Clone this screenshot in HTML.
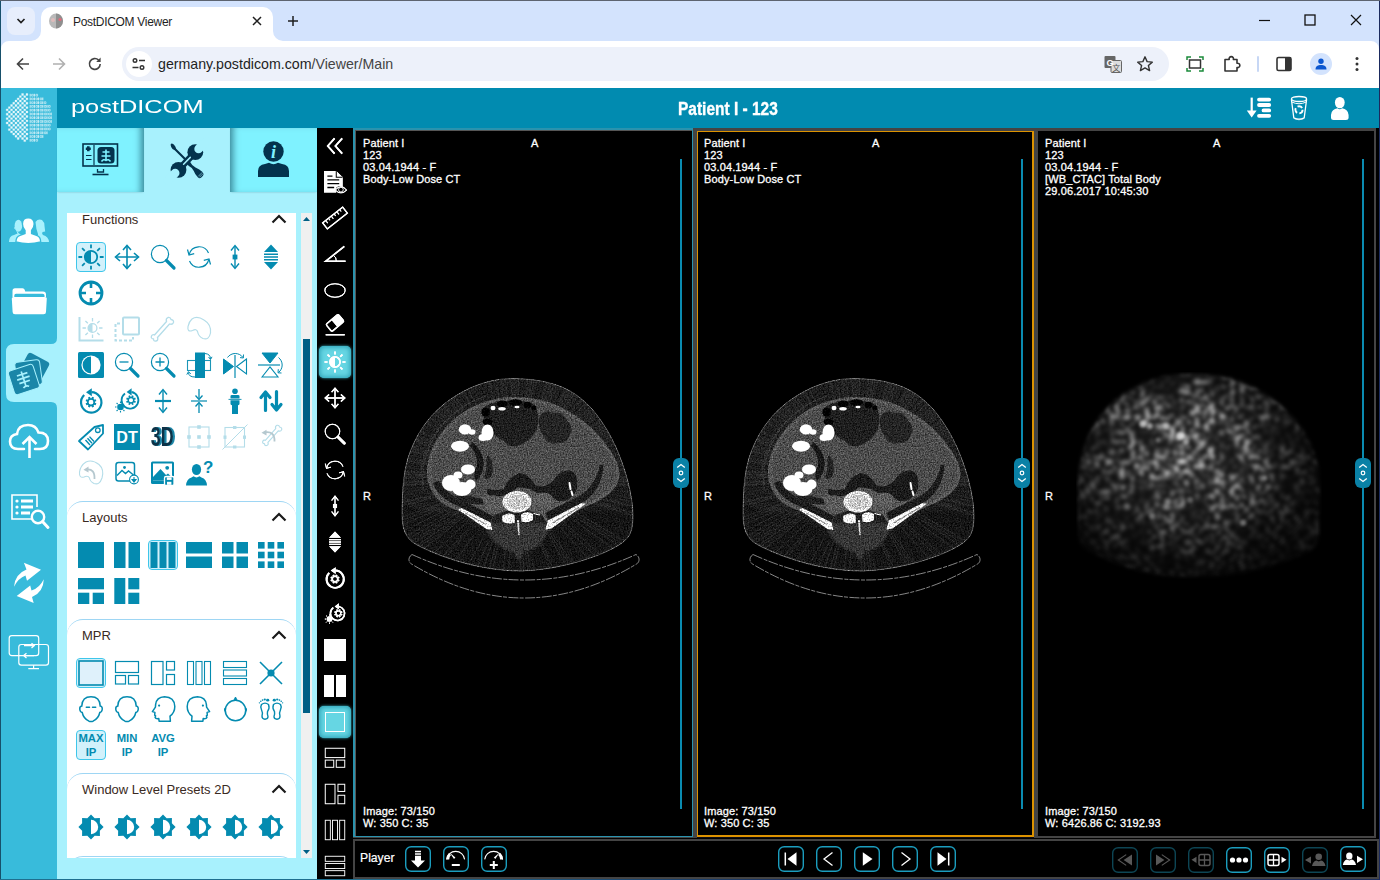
<!DOCTYPE html>
<html><head><meta charset='utf-8'><title>PostDICOM Viewer</title>
<style>
*{box-sizing:border-box;margin:0;padding:0}
html,body{width:1380px;height:880px;overflow:hidden;background:#000;font-family:"Liberation Sans",sans-serif}
.abs{position:absolute}
#root{position:relative;width:1380px;height:880px;overflow:hidden;background:#000}
svg{position:absolute;overflow:visible}
.t{position:absolute;white-space:nowrap}

#tabstrip{left:0;top:0;width:1380px;height:41px;background:#d3e3fd}
#toolbar{left:0;top:41px;width:1380px;height:47px;background:#fff}
#tab{left:41px;top:7px;width:232px;height:34px;background:#fff;border-radius:10px 10px 0 0}
#omni{left:122px;top:47px;width:1047px;height:34px;border-radius:17px;background:#edf1fa}
.ct{font-size:12.5px;color:#1f1f1f}

#side{left:1px;top:88px;width:56px;height:792px;background:#38bbdb}
#hdr{left:57px;top:88px;width:1323px;height:40px;background:#018bb0}

#panel{left:57px;top:128px;width:260px;height:752px;background:#a8f1fd}
.ptab{top:128px;height:64px;background:#7ff2ff}
#pbox{left:67px;top:213px;width:229px;height:645px;background:#fff;overflow:hidden}
.sec{position:absolute;left:0;width:229px;border-top:1px solid #9ed6f4;border-radius:16px 16px 0 0;height:40px}
.sh{position:absolute;left:15px;font-size:13px;color:#3a2a22}
.ic{position:absolute;width:26px;height:26px}
.selb{position:absolute;width:30px;height:30px;border:1px solid #3ec6ea;border-radius:4px;background:#d2f1fb}

#vtool{left:317px;top:128px;width:36px;height:752px;background:#000}
.vsel{position:absolute;left:319px;width:32px;height:32px;border-radius:5px;background:#66d6e3;box-shadow:inset 0 0 5px 1px #2a9fb4, 0 0 3px #39b9cc}

.vt{position:absolute;white-space:nowrap;font-size:11px;line-height:12px;color:#fff;-webkit-text-stroke:.3px #fff;letter-spacing:.13px}
.sl{position:absolute;width:2px;background:#0a8bb0}
.sh2{position:absolute;width:16px;height:30px;border-radius:6px;background:#0a81a6}

#player{left:353px;top:839px;width:1026px;height:40px;background:#000;border:2px solid #444}
.pb{position:absolute;top:846px;width:26px;height:26px;border:1px solid #1c9fc0;border-radius:5px;background:#000}
.pb.d{border-color:#0d4453}
</style></head><body><div id='root'>
<div class='abs' id='tabstrip'></div><div class='abs' id='toolbar'></div><div class='abs' style='left:7px;top:7px;width:28px;height:28px;border-radius:8px;background:#e7eefc'></div><svg style='left:15px;top:15px' width='12' height='12' viewBox='0 0 12 12'><path d='M2.5 4 L6 7.5 L9.5 4' fill='none' stroke='#1f1f1f' stroke-width='1.7'/></svg><div class='abs' id='tab'></div><svg style='left:31px;top:31px' width='10' height='10'><path d='M10 0 V10 H0 A10 10 0 0 0 10 0Z' fill='#fff'/></svg><svg style='left:273px;top:31px' width='10' height='10'><path d='M0 0 V10 H10 A10 10 0 0 1 0 0Z' fill='#fff'/></svg><svg style='left:1px;top:41px' width='8' height='8'><path d='M0 0 H8 A8 8 0 0 0 0 8Z' fill='#d3e3fd'/></svg><svg style='left:1371px;top:41px' width='8' height='8'><path d='M8 0 H0 A8 8 0 0 1 8 8Z' fill='#d3e3fd'/></svg><svg style='left:48px;top:13px' width='16' height='16' viewBox='0 0 16 16'><ellipse cx='8' cy='8' rx='7' ry='7.6' fill='#b9b9b9'/><path d='M8 .4 A7 7.6 0 0 1 8 15.6Z' fill='#8f8f8f'/><circle cx='12' cy='6.5' r='1.6' fill='#e06a7a'/><circle cx='5' cy='7' r='2' fill='#e9bcbc' opacity='.8'/></svg><div class='t ct' style='left:73px;top:14.500px;font-size:12px;letter-spacing:-.3px'>PostDICOM Viewer</div><svg style='left:251px;top:15px' width='12' height='12'><path d='M2 2 L10 10 M10 2 L2 10' stroke='#1f1f1f' stroke-width='1.5'/></svg><svg style='left:287px;top:15px' width='12' height='12'><path d='M6 1 V11 M1 6 H11' stroke='#1f1f1f' stroke-width='1.5'/></svg><svg style='left:1259px;top:14px' width='12' height='12'><path d='M0 6.5 H11' stroke='#111' stroke-width='1.2'/></svg><svg style='left:1304px;top:14px' width='12' height='12'><rect x='1' y='1' width='10' height='10' fill='none' stroke='#111' stroke-width='1.3'/></svg><svg style='left:1350px;top:14px' width='12' height='12'><path d='M1 1 L11 11 M11 1 L1 11' stroke='#111' stroke-width='1.2'/></svg><svg style='left:15px;top:56px' width='16' height='16' viewBox='0 0 16 16'><path d='M14 8 H3 M8 2.5 L2.5 8 L8 13.5' fill='none' stroke='#444' stroke-width='1.6'/></svg><svg style='left:51px;top:56px' width='16' height='16' viewBox='0 0 16 16'><path d='M2 8 H13 M8 2.5 L13.5 8 L8 13.5' fill='none' stroke='#b0b0b0' stroke-width='1.6'/></svg><svg style='left:87px;top:56px' width='16' height='16' viewBox='0 0 16 16'><path d='M13.2 8 A5.4 5.4 0 1 1 11.6 4.1' fill='none' stroke='#444' stroke-width='1.6'/><path d='M13.6 1.6 V6 H9.2Z' fill='#444'/></svg><div class='abs' id='omni'></div><div class='abs' style='left:126px;top:51px;width:26px;height:26px;border-radius:13px;background:#fff'></div><svg style='left:131px;top:57px' width='16' height='14' viewBox='0 0 16 14'><circle cx='4' cy='3.5' r='1.8' fill='none' stroke='#333' stroke-width='1.4'/><path d='M8 3.5 H14' stroke='#333' stroke-width='1.5'/><circle cx='11' cy='10.5' r='1.8' fill='none' stroke='#333' stroke-width='1.4'/><path d='M1.5 10.5 H7.5' stroke='#333' stroke-width='1.5'/></svg><div class='t' style='left:158px;top:56px;font-size:14.2px;color:#1f1f1f'>germany.postdicom.com<span style='color:#444'>/Viewer/Main</span></div><svg style='left:1104px;top:55px' width='18' height='18' viewBox='0 0 18 18'><rect x='0.5' y='1' width='11' height='12' rx='1' fill='#666'/><rect x='7' y='5.5' width='10.5' height='12' rx='1' fill='#ddd' stroke='#666' stroke-width='1'/><text x='6' y='10.5' font-size='9' font-weight='bold' fill='#fff' text-anchor='middle' font-family='Liberation Sans, sans-serif'>G</text><text x='12.3' y='15.5' font-size='8' fill='#555' text-anchor='middle' font-family='Liberation Sans, Noto Sans CJK SC, sans-serif'>文</text></svg><svg style='left:1136px;top:55px' width='18' height='18' viewBox='0 0 18 18'><path d='M9 1.8 L11.1 6.6 L16.3 7.1 L12.4 10.5 L13.6 15.6 L9 12.9 L4.4 15.6 L5.6 10.5 L1.7 7.1 L6.9 6.6Z' fill='none' stroke='#333' stroke-width='1.4' stroke-linejoin='round'/></svg><svg style='left:1186px;top:55px' width='18' height='18' viewBox='0 0 18 18'><rect x='3.5' y='5' width='11' height='8' fill='none' stroke='#333' stroke-width='1.5'/><path d='M1 5 V2 H5 M13 2 H17 V5 M17 13 V16 H13 M5 16 H1 V13' fill='none' stroke='#1a8a3a' stroke-width='1.5'/></svg><svg style='left:1222px;top:54px' width='20' height='20' viewBox='0 0 20 20'><path d='M3 5.5 H7.2 A2.2 2.2 0 1 1 11.4 5.5 H15 V9.3 A2.2 2.2 0 1 1 15 13.5 V17 H3Z' fill='none' stroke='#333' stroke-width='1.6' stroke-linejoin='round'/></svg><div class='abs' style='left:1257px;top:56px;width:2px;height:16px;background:#c7d7f5;border-radius:1px'></div><svg style='left:1276px;top:56px' width='16' height='16' viewBox='0 0 16 16'><rect x='1' y='1.5' width='14' height='13' rx='1.5' fill='none' stroke='#333' stroke-width='1.6'/><rect x='9' y='1.5' width='6' height='13' fill='#333'/></svg><div class='abs' style='left:1310px;top:53px;width:22px;height:22px;border-radius:11px;background:#d3e3fd'></div><svg style='left:1314px;top:57px' width='14' height='14' viewBox='0 0 14 14'><circle cx='7' cy='4.3' r='2.7' fill='#0b57d0'/><path d='M1.5 12.5 C1.5 9 4 8 7 8 C10 8 12.5 9 12.5 12.5Z' fill='#0b57d0'/></svg><svg style='left:1354px;top:56px' width='6' height='16' viewBox='0 0 6 16'><circle cx='3' cy='2.5' r='1.5' fill='#333'/><circle cx='3' cy='8' r='1.5' fill='#333'/><circle cx='3' cy='13.5' r='1.5' fill='#333'/></svg>
<div class='abs' id='side'></div><div class='abs' id='hdr'></div><svg style='left:0;top:88px' width='58' height='58' viewBox='0 0 58 58'><path d='M26.0 5.5h1.900v1.900h-1.900zM21.6 5.5h1.900v1.900h-1.900zM23.8 7.7h1.900v1.900h-1.900zM19.4 7.7h1.900v1.900h-1.900zM26.0 9.9h1.900v1.900h-1.900zM21.6 9.9h1.900v1.900h-1.900zM17.2 9.9h1.900v1.900h-1.900zM23.8 12.1h1.900v1.900h-1.900zM19.4 12.1h1.900v1.900h-1.900zM15.0 12.1h1.900v1.900h-1.900zM26.0 14.3h1.900v1.900h-1.900zM21.6 14.3h1.900v1.900h-1.900zM17.2 14.3h1.900v1.900h-1.900zM12.8 14.3h1.900v1.900h-1.900zM23.8 16.5h1.900v1.900h-1.900zM19.4 16.5h1.900v1.900h-1.900zM15.0 16.5h1.900v1.900h-1.900zM10.6 16.5h1.900v1.900h-1.900zM26.0 18.7h1.900v1.900h-1.900zM21.6 18.7h1.900v1.900h-1.900zM17.2 18.7h1.900v1.900h-1.900zM12.8 18.7h1.900v1.900h-1.900zM8.4 18.7h1.900v1.900h-1.900zM23.8 20.9h1.900v1.900h-1.900zM19.4 20.9h1.900v1.900h-1.900zM15.0 20.9h1.900v1.900h-1.900zM10.6 20.9h1.900v1.900h-1.900zM6.2 20.9h1.900v1.900h-1.900zM26.0 23.1h1.900v1.900h-1.900zM21.6 23.1h1.900v1.900h-1.900zM17.2 23.1h1.900v1.900h-1.900zM12.8 23.1h1.900v1.900h-1.900zM8.4 23.1h1.900v1.900h-1.900zM23.8 25.3h1.900v1.900h-1.900zM19.4 25.3h1.900v1.900h-1.900zM15.0 25.3h1.900v1.900h-1.900zM10.6 25.3h1.900v1.900h-1.900zM6.2 25.3h1.900v1.900h-1.900zM26.0 27.5h1.900v1.900h-1.900zM21.6 27.5h1.900v1.900h-1.900zM17.2 27.5h1.900v1.900h-1.900zM12.8 27.5h1.900v1.900h-1.900zM8.4 27.5h1.900v1.900h-1.900zM23.8 29.7h1.900v1.900h-1.900zM19.4 29.7h1.900v1.900h-1.900zM15.0 29.7h1.900v1.900h-1.900zM10.6 29.7h1.900v1.900h-1.900zM6.2 29.7h1.900v1.900h-1.900zM26.0 31.9h1.900v1.900h-1.900zM21.6 31.9h1.900v1.900h-1.900zM17.2 31.9h1.900v1.900h-1.900zM12.8 31.9h1.900v1.900h-1.900zM8.4 31.9h1.900v1.900h-1.900zM23.8 34.1h1.900v1.900h-1.900zM19.4 34.1h1.900v1.900h-1.900zM15.0 34.1h1.900v1.900h-1.900zM10.6 34.1h1.900v1.900h-1.900zM6.2 34.1h1.900v1.900h-1.900zM26.0 36.3h1.900v1.900h-1.900zM21.6 36.3h1.900v1.900h-1.900zM17.2 36.3h1.900v1.900h-1.900zM12.8 36.3h1.900v1.900h-1.900zM8.4 36.3h1.900v1.900h-1.900zM23.8 38.5h1.900v1.900h-1.900zM19.4 38.5h1.900v1.900h-1.900zM15.0 38.5h1.900v1.900h-1.900zM10.6 38.5h1.900v1.900h-1.900zM26.0 40.7h1.900v1.900h-1.900zM21.6 40.7h1.900v1.900h-1.900zM17.2 40.7h1.900v1.900h-1.900zM12.8 40.7h1.900v1.900h-1.900zM8.4 40.7h1.900v1.900h-1.900zM23.8 42.9h1.900v1.900h-1.900zM19.4 42.9h1.900v1.900h-1.900zM15.0 42.9h1.900v1.900h-1.900zM10.6 42.9h1.900v1.900h-1.900zM26.0 45.1h1.900v1.900h-1.900zM21.6 45.1h1.900v1.900h-1.900zM17.2 45.1h1.900v1.900h-1.900zM12.8 45.1h1.900v1.900h-1.900zM23.8 47.3h1.900v1.900h-1.900zM19.4 47.3h1.900v1.900h-1.900zM15.0 47.3h1.900v1.900h-1.900zM26.0 49.5h1.900v1.900h-1.900zM21.6 49.5h1.900v1.900h-1.900zM17.2 49.5h1.900v1.900h-1.900zM23.8 51.7h1.900v1.900h-1.900z' fill='#fff' stroke='#fff' stroke-width='.3' opacity='.9'/><path d='M30.2 5.8v2.800M34.4 5.8v2.800M30.2 9.5v2.800M34.4 9.5v2.800M38.6 9.5v2.800M42.8 9.5v2.800M30.2 13.3v2.800M34.4 13.3v2.800M38.6 13.3v2.800M42.8 13.3v2.800M30.2 17.0v2.800M34.4 17.0v2.800M38.6 17.0v2.800M42.8 17.0v2.800M47.0 17.0v2.800M30.2 20.8v2.800M34.4 20.8v2.800M38.6 20.8v2.800M42.8 20.8v2.800M47.0 20.8v2.800M30.2 24.6v2.800M34.4 24.6v2.800M38.6 24.6v2.800M42.8 24.6v2.800M47.0 24.6v2.800M51.2 24.6v2.800M30.2 28.3v2.800M34.4 28.3v2.800M38.6 28.3v2.800M42.8 28.3v2.800M47.0 28.3v2.800M51.2 28.3v2.800M30.2 32.1v2.800M34.4 32.1v2.800M38.6 32.1v2.800M42.8 32.1v2.800M47.0 32.1v2.800M51.2 32.1v2.800M30.2 35.8v2.800M34.4 35.8v2.800M38.6 35.8v2.800M42.8 35.8v2.800M47.0 35.8v2.800M30.2 39.6v2.800M34.4 39.6v2.800M38.6 39.6v2.800M42.8 39.6v2.800M47.0 39.6v2.800M30.2 43.4v2.800M34.4 43.4v2.800M38.6 43.4v2.800M42.8 43.4v2.800M47.0 43.4v2.800M30.2 47.1v2.800M34.4 47.1v2.800M38.6 47.1v2.800M42.8 47.1v2.800M30.2 50.9v2.800M34.4 50.9v2.800' fill='none' stroke='#fff' stroke-width='.9' opacity='.85'/><path d='M31.6 6.3h1.700v1.800h-1.700zM35.9 6.3h1.700v1.800h-1.700zM31.6 10.0h1.700v1.800h-1.700zM35.9 10.0h1.700v1.800h-1.700zM40.1 10.0h1.700v1.800h-1.700zM31.6 13.8h1.700v1.800h-1.700zM35.9 13.8h1.700v1.800h-1.700zM40.1 13.8h1.700v1.800h-1.700zM44.3 13.8h1.700v1.800h-1.700zM31.6 17.5h1.700v1.800h-1.700zM35.9 17.5h1.700v1.800h-1.700zM40.1 17.5h1.700v1.800h-1.700zM44.3 17.5h1.700v1.800h-1.700zM48.5 17.5h1.700v1.800h-1.700zM31.6 21.3h1.700v1.800h-1.700zM35.9 21.3h1.700v1.800h-1.700zM40.1 21.3h1.700v1.800h-1.700zM44.3 21.3h1.700v1.800h-1.700zM48.5 21.3h1.700v1.800h-1.700zM31.6 25.1h1.700v1.800h-1.700zM35.9 25.1h1.700v1.800h-1.700zM40.1 25.1h1.700v1.800h-1.700zM44.3 25.1h1.700v1.800h-1.700zM48.5 25.1h1.700v1.800h-1.700zM31.6 28.8h1.700v1.800h-1.700zM35.9 28.8h1.700v1.800h-1.700zM40.1 28.8h1.700v1.800h-1.700zM44.3 28.8h1.700v1.800h-1.700zM48.5 28.8h1.700v1.800h-1.700zM31.6 32.6h1.700v1.800h-1.700zM35.9 32.6h1.700v1.800h-1.700zM40.1 32.6h1.700v1.800h-1.700zM44.3 32.6h1.700v1.800h-1.700zM48.5 32.6h1.700v1.800h-1.700zM31.6 36.3h1.700v1.800h-1.700zM35.9 36.3h1.700v1.800h-1.700zM40.1 36.3h1.700v1.800h-1.700zM44.3 36.3h1.700v1.800h-1.700zM48.5 36.3h1.700v1.800h-1.700zM31.6 40.1h1.700v1.800h-1.700zM35.9 40.1h1.700v1.800h-1.700zM40.1 40.1h1.700v1.800h-1.700zM44.3 40.1h1.700v1.800h-1.700zM48.5 40.1h1.700v1.800h-1.700zM31.6 43.9h1.700v1.800h-1.700zM35.9 43.9h1.700v1.800h-1.700zM40.1 43.9h1.700v1.800h-1.700zM44.3 43.9h1.700v1.800h-1.700zM31.6 47.6h1.700v1.800h-1.700zM35.9 47.6h1.700v1.800h-1.700zM40.1 47.6h1.700v1.800h-1.700zM31.6 51.4h1.700v1.800h-1.700zM35.9 51.4h1.700v1.800h-1.700z' fill='none' stroke='#fff' stroke-width='.65' opacity='.8'/></svg><div class='t' style='left:71px;top:96.500px;font-size:17.500px;color:#fff;transform:scaleX(1.45);transform-origin:0 0'>postDICOM</div><div class='t' style='left:678px;top:98.800px;font-size:17.500px;font-weight:bold;color:#fff;-webkit-text-stroke:.35px #fff;transform:scaleX(.885);transform-origin:0 0'>Patient I - 123</div><svg style='left:1246px;top:95px' width='26' height='26' viewBox='0 0 26 26'><path d='M5.700 2.600 V17' stroke='#fff' stroke-width='2.200'/><path d='M.800 15.500 L5.700 22.600 L10.600 15.500Z' fill='#fff'/><path d='M13 4.600 H23.200 M13 10 H23.200 M17.500 15.400 H23.200 M13 20.800 H23.200' stroke='#fff' stroke-width='3.800' stroke-linecap='round'/></svg><svg style='left:1288px;top:94px' width='22' height='28' viewBox='0 0 22 28'><ellipse cx='11' cy='5' rx='7.600' ry='2.500' fill='none' stroke='#fff' stroke-width='1.300'/><path d='M3.400 5.500 L5.800 23.800 Q11 26.300 16.200 23.800 L18.600 5.500' fill='none' stroke='#fff' stroke-width='1.300'/><path d='M3.800 8 Q11 11.500 18.200 8' fill='none' stroke='#fff' stroke-width='1'/><circle cx='11' cy='15.800' r='3.600' fill='none' stroke='#fff' stroke-width='1.900' stroke-dasharray='5.200 2.300'/><path d='M6.500 24.800 Q11 26.800 15.500 24.800' fill='none' stroke='#fff' stroke-width='.8' opacity='.8'/></svg><svg style='left:1329px;top:94px' width='22' height='28' viewBox='0 0 22 28'><ellipse cx='10.800' cy='8.600' rx='4.900' ry='5.700' fill='#fff'/><path d='M2 24 Q1.500 16.500 6 15 L8.500 14.300 Q10.800 16 13.100 14.300 L15.600 15 Q20 16.500 19.600 24 Q19.500 25.800 17 26 H4.500 Q2 25.800 2 24Z' fill='#fff'/></svg><svg style='left:1px;top:334px' width='57' height='78' viewBox='0 0 57 78'><path d='M56 4 V74 Q56 68 50 68 H13 Q5 68 5 60 V18 Q5 10 13 10 H50 Q56 10 56 4Z' fill='#a8f1fd'/></svg><svg style='left:8px;top:215px' width='42' height='30' viewBox='0 0 42 30'><g fill='#a8f1fd'><ellipse cx='10.400' cy='10.800' rx='3.800' ry='6'/><path d='M6.600 12 Q9 16 11 18.500 L14 20 V27 H.900 Q1 21 6 20 L9.500 18.500Z'/><path d='M6.600 12 L5.800 13 L7.500 14.500Z'/><path d='M27.500 7 Q30 3.500 34 5 Q36.500 7 36.500 11 L37.200 16.500 L34.500 17 Q33.500 19 35 20 Q40.500 21.500 41 27 H30 V19 Q28 14 27.500 7Z'/></g><g fill='#fff' stroke='#38bbdb' stroke-width='1.400'><path d='M20.300 2.700 Q26.200 2.700 26.200 9 Q26.200 12.500 23.600 15.500 V18.500 L28.500 20.300 Q32.700 21.500 32.700 27 Q20.300 30.300 7.900 27 Q7.900 21.500 12.100 20.300 L17 18.500 V15.500 Q14.400 12.500 14.400 9 Q14.400 2.700 20.300 2.700Z'/></g></svg><svg style='left:11px;top:287px' width='37' height='28' viewBox='0 0 37 28'><path d='M1.500 4 Q1.500 1.300 4 1.300 H11.500 Q13.300 1.300 13.800 3 L14.200 4.500 H32 Q35 4.500 35 7.500 V10 H33.500 V8.500 Q33.500 6.800 31.500 6.800 H5 Q3.300 6.800 3.300 8.500 V10 H1.500Z' fill='#fff'/><path d='M.800 11.500 Q.800 10 2.500 10 H34 Q35.800 10 35.800 11.500 L35 25 Q35 27.300 32.500 27.300 H4 Q1.700 27.300 1.600 25Z' fill='#fff'/></svg><svg style='left:8px;top:350px' width='42' height='46' viewBox='0 0 42 46'><rect x='14' y='6' width='24' height='24' rx='3' fill='#1a86a8' transform='rotate(28 26 18)'/><rect x='8' y='11' width='25' height='25' rx='3' fill='#1a86a8' stroke='#a8f1fd' stroke-width='1' transform='rotate(-8 20 23)'/><g transform='rotate(-18 16 30)'><rect x='3' y='17' width='26' height='25' rx='3' fill='#1a86a8' stroke='#a8f1fd' stroke-width='1'/><path d='M16 21 V37 M10.5 24 H21.5 M9.5 28 H22.5 M10.5 32 H21.5 M13 37.5 Q16 35 19 37.5' stroke='#a8f1fd' stroke-width='1.7' fill='none'/></g></svg><svg style='left:8px;top:422px' width='42' height='38' viewBox='0 0 42 38'><path d='M16 27 H10 Q2 27 2 19.5 Q2 13 9 12 Q10 3 20 3 Q28 3 30.5 10.5 Q40 10.5 40 19 Q40 27 32 27 H27' fill='none' stroke='#fff' stroke-width='2.6' stroke-linecap='round'/><path d='M21.5 36 V16 M14.5 22 L21.5 15 L28.5 22' fill='none' stroke='#fff' stroke-width='2.6'/></svg><svg style='left:10px;top:493px' width='40' height='38' viewBox='0 0 40 38'><path d='M27 26 H2 V2 H27 V14' fill='none' stroke='#fff' stroke-width='1.6'/><g fill='#fff'><circle cx='7' cy='8' r='1.6'/><circle cx='7' cy='14' r='1.6'/><circle cx='7' cy='20' r='1.6'/><rect x='11' y='6.5' width='12' height='3'/><rect x='11' y='12.5' width='12' height='3'/><rect x='11' y='18.5' width='9' height='3'/></g><circle cx='28' cy='24' r='6.2' fill='#38bbdb' stroke='#fff' stroke-width='2.4'/><path d='M32.5 28.5 L38 34.5' stroke='#fff' stroke-width='3' stroke-linecap='round'/></svg><svg style='left:12px;top:560px' width='34' height='46' viewBox='0 0 34 46'><path d='M2 26.700 Q3 14 14.500 9.500 L11.900 2.800 L29 9.700 L15 20.800 L13.500 15.500 Q6.500 18 2 26.700Z' fill='#fff'/><path d='M31.800 19.200 Q31.500 32 20 37 L21.700 43 L4.700 36 L18.200 25.600 L19.500 30.500 Q27.500 28 31.800 19.200Z' fill='#fff'/></svg><svg style='left:8px;top:633px' width='42' height='40' viewBox='0 0 42 40'><rect x='1.200' y='2.700' width='29.500' height='19.900' rx='2.600' fill='none' stroke='#fff' stroke-width='1.200'/><rect x='10.800' y='11.500' width='29.700' height='20.700' rx='2.600' fill='none' stroke='#fff' stroke-width='1.200'/><path d='M16 12.600 H26 M23.500 10.300 L26.300 12.600 L23.500 14.900 M26 22.600 H16 M18.500 20.300 L15.700 22.600 L18.500 24.900' fill='none' stroke='#fff' stroke-width='1.300'/><path d='M25.600 32.200 V35.400 M20.300 35.700 H31' stroke='#fff' stroke-width='1.200'/></svg>
<div class='abs' id='panel'></div><div class='abs ptab' style='left:57px;width:87px;box-shadow:inset -7px 0 7px -4px rgba(0,50,70,.55), 0 1px 2px -1px rgba(0,60,80,.3)'></div><div class='abs ptab' style='left:230px;width:87px;box-shadow:inset 7px 0 7px -4px rgba(0,50,70,.55), 0 1px 2px -1px rgba(0,60,80,.3)'></div><svg style='left:82px;top:143px' width='37' height='33' viewBox='0 0 37 33'><rect x='1' y='1' width='34.5' height='22' fill='none' stroke='#04334d' stroke-width='1.6'/><path d='M12 2 V22' stroke='#04334d' stroke-width='1.2'/><path d='M6.3 3.2 V8.2 M3.8 5.7 H8.8' stroke='#04334d' stroke-width='2.6'/><path d='M4 12.5 H9.5 M4 16.5 H9.5' stroke='#04334d' stroke-width='1'/><rect x='15.5' y='4' width='17' height='16.5' rx='3.5' fill='#04334d'/><path d='M24 6.5 V18 M20.5 9 H27.5 M19.5 13 H28.5 M19.5 18.5 Q21.5 15.5 24 17.5 Q26.500 15.5 28.5 18.5' fill='none' stroke='#7ff2ff' stroke-width='1.6'/><path d='M15.5 26 V29 H21.5 V26' fill='none' stroke='#04334d' stroke-width='1.3'/><path d='M10.5 31.5 H26.5' stroke='#04334d' stroke-width='1.6'/></svg><svg style='left:169.700px;top:142.700px' width='35' height='36' viewBox='0 0 35 36'><path d='M.700 2.200 Q.300 .400 2 .500 Q4 1.200 5.300 3.500 L6.200 5.700 L16.500 16 L15 17.500 L4.700 7.200 L2.500 6 Q1 4.500 .700 2.200Z' fill='#04334d'/><path d='M17.500 17 L20 18.800 Q22 23 25.500 24.500 Q29.500 26 32.500 29 Q34.500 31 33 32.800 L31 34.800 Q29.500 35.800 27.800 34.300 Q24.500 30.500 23.800 28 Q22 24.500 18.500 22.800 L16 19Z' fill='#04334d'/><path d='M28.300 33.300 L32.300 29.300 M29.400 34.300 L33.200 30.500' stroke='#a8f1fd' stroke-width='.6'/><path d='M25.500 9 L8.300 27' stroke='#04334d' stroke-width='6.400'/><circle cx='25.300' cy='9.200' r='7.900' fill='#04334d'/><circle cx='8.500' cy='26.800' r='7.900' fill='#04334d'/><path d='M28.600 5.900 L36 -1.500' stroke='#a8f1fd' stroke-width='8.600' stroke-linecap='round'/><path d='M5.200 30.100 L-2 37.500' stroke='#a8f1fd' stroke-width='8.600' stroke-linecap='round'/><path d='M13.600 21.200 L20.300 14.400' stroke='#a8f1fd' stroke-width='1.500' stroke-linecap='round'/></svg><svg style='left:257px;top:141px' width='33' height='37' viewBox='0 0 33 37'><circle cx='16.5' cy='10.5' r='10.2' fill='#04334d'/><path d='M1 36 V30 Q1 24 8 23 L12 21.800 Q16.500 24.500 21 21.800 L25 23 Q32 24 32 30 V36Z' fill='#04334d'/><text x='16.600' y='17' font-family='Liberation Serif, serif' font-weight='bold' font-style='italic' font-size='18' fill='#7ff2ff' text-anchor='middle'>i</text></svg><div class='abs' id='pbox'><div class='sh' style='top:-1px'>Functions</div><svg style='left:204px;top:1px' width='16' height='10' viewBox='0 0 16 10'><path d='M1.5 8.5 L8 2 L14.5 8.5' fill='none' stroke='#1a1a1a' stroke-width='2.2'/></svg><div class='selb' style='left:9px;top:29px'></div><svg class='ic' style='left:11px;top:31px' viewBox='0 0 26 26'><circle cx='13' cy='13' r='6.2' fill='none' stroke='#048bb0' stroke-width='1.8'/><path d='M13 6.8 A6.2 6.2 0 0 0 13 19.2Z' fill='#048bb0'/><path d='M21.80 13.00 L25.60 13.00 M19.22 19.22 L21.91 21.91 M13.00 21.80 L13.00 25.60 M6.78 19.22 L4.09 21.91 M4.20 13.00 L0.40 13.00 M6.78 6.78 L4.09 4.09 M13.00 4.20 L13.00 0.40 M19.22 6.78 L21.91 4.09 ' stroke='#048bb0' stroke-width='1.8' fill='none'/></svg><svg class='ic' style='left:47px;top:31px' viewBox='0 0 26 26'><path d='M13 2 V24 M2 13 H24' stroke='#048bb0' stroke-width='1.6' fill='none'/><path d='M9 6 L13 1.5 L17 6 M9 20 L13 24.5 L17 20 M6 9 L1.5 13 L6 17 M20 9 L24.5 13 L20 17' stroke='#048bb0' stroke-width='1.6' fill='none'/></svg><svg class='ic' style='left:83px;top:31px' viewBox='0 0 26 26'><circle cx='10' cy='10' r='8.6' fill='none' stroke='#048bb0' stroke-width='1.2'/><path d='M16.5 16.5 L24 24' stroke='#048bb0' stroke-width='3.2' stroke-linecap='round'/></svg><svg class='ic' style='left:119px;top:31px' viewBox='0 0 26 26'><path d='M3.2 10.5 A10.2 10.2 0 0 1 22.5 9' fill='none' stroke='#048bb0' stroke-width='1.2'/><path d='M22.8 15.5 A10.2 10.2 0 0 1 3.5 17' fill='none' stroke='#048bb0' stroke-width='1.2'/><path d='M1.5 5.5 L3 11 L8.2 9.6' fill='none' stroke='#048bb0' stroke-width='1.2'/><path d='M24.5 20.5 L23 15 L17.8 16.4' fill='none' stroke='#048bb0' stroke-width='1.2'/></svg><svg class='ic' style='left:155px;top:31px' viewBox='0 0 26 26'><path d='M13 2 V24' stroke='#048bb0' stroke-width='1.4'/><path d='M9 6.5 L13 1.5 L17 6.5 M9 19.5 L13 24.5 L17 19.5' fill='none' stroke='#048bb0' stroke-width='1.4'/><rect x='10.6' y='10.6' width='4.8' height='4.8' fill='#048bb0'/></svg><svg class='ic' style='left:191px;top:31px' viewBox='0 0 26 26'><path d='M13 .500 L20 8 H6Z M13 25.500 L20 18 H6Z' fill='#048bb0'/><path d='M6 10.300 H20 M6 13 H20 M6 15.700 H20' stroke='#048bb0' stroke-width='1.500'/></svg><svg class='ic' style='left:11px;top:67px' viewBox='0 0 26 26'><circle cx='13' cy='13' r='11' fill='none' stroke='#048bb0' stroke-width='2.8'/><path d='M13 2 V8 M13 18 V24 M2 13 H8 M18 13 H24' stroke='#048bb0' stroke-width='2.6'/></svg><svg class='ic' style='left:11px;top:103px' viewBox='0 0 26 26'><path d='M1.5 1 V24.5 H25.5' fill='none' stroke='#b4dde9' stroke-width='2'/><circle cx='14.5' cy='12' r='4.4' fill='none' stroke='#b4dde9' stroke-width='1.3'/><path d='M14.5 7.6 A4.4 4.4 0 0 0 14.5 16.4Z' fill='#b4dde9'/><path d='M21.10 12.00 L24.50 12.00 M19.17 16.67 L21.57 19.07 M14.50 18.60 L14.50 22.00 M9.83 16.67 L7.43 19.07 M7.90 12.00 L4.50 12.00 M9.83 7.33 L7.43 4.93 M14.50 5.40 L14.50 2.00 M19.17 7.33 L21.57 4.93 ' stroke='#b4dde9' stroke-width='1.3' fill='none'/></svg><svg class='ic' style='left:47px;top:103px' viewBox='0 0 26 26'><rect x='9' y='1.5' width='16' height='17' rx='1' fill='none' stroke='#b4dde9' stroke-width='2'/><path d='M6 7.5 H1.5 V24.5 H19 V21' fill='none' stroke='#b4dde9' stroke-width='2' stroke-dasharray='3 2'/></svg><svg class='ic' style='left:83px;top:103px' viewBox='0 0 26 26'><path d='M4.5 19 L16.5 5.5 Q15.5 2.5 18 1.5 Q20.5 1 21 3.5 Q24 4 23.5 6.5 Q22.5 9 19.5 8 L7.5 21.5 Q8.5 24.5 6 25 Q3.5 25.5 3.5 23 Q.5 22.5 1.5 20 Q2.5 18 4.5 19Z' fill='none' stroke='#b4dde9' stroke-width='1.3'/></svg><svg class='ic' style='left:119px;top:103px' viewBox='0 0 26 26'><path d='M6 3 Q11 -.5 18 4 Q25.5 8.5 24.5 17 Q23 24.5 17 22.5 Q12.5 20.5 11.5 15.5 Q10.5 12.5 6.5 14.5 Q1 16.5 2 10.5 Q3 5.5 6 3Z' fill='none' stroke='#b4dde9' stroke-width='1.2'/></svg><svg class='ic' style='left:11px;top:139px' viewBox='0 0 26 26'><rect x='0' y='0' width='26' height='26' rx='1.5' fill='#048bb0'/><circle cx='13' cy='13' r='9.6' fill='#fff'/><path d='M13 4.6 A8.4 8.4 0 0 0 13 21.4Z' fill='#048bb0'/></svg><svg class='ic' style='left:47px;top:139px' viewBox='0 0 26 26'><circle cx='10' cy='10' r='8.6' fill='none' stroke='#048bb0' stroke-width='1.2'/><path d='M16.5 16.5 L24 24' stroke='#048bb0' stroke-width='3.2' stroke-linecap='round'/><path d='M5.5 10 H14.5' stroke='#048bb0' stroke-width='1.3'/></svg><svg class='ic' style='left:83px;top:139px' viewBox='0 0 26 26'><circle cx='10' cy='10' r='8.6' fill='none' stroke='#048bb0' stroke-width='1.2'/><path d='M16.5 16.5 L24 24' stroke='#048bb0' stroke-width='3.2' stroke-linecap='round'/><path d='M5.5 10 H14.5 M10 5.5 V14.5' stroke='#048bb0' stroke-width='1.3'/></svg><svg class='ic' style='left:119px;top:139px' viewBox='0 0 26 26'><rect x='1.5' y='8.5' width='23' height='10' fill='#fff' stroke='#048bb0' stroke-width='1.1' opacity='.9'/><rect x='9' y='.5' width='10' height='25.5' fill='#048bb0'/><path d='M19 1.5 Q24.5 2 24.5 7 M22.6 5 L24.5 7.6 L26 4.8' fill='none' stroke='#048bb0' stroke-width='1'/><path d='M9 25 Q2.5 25 2.5 20.5 M.8 22.6 L2.5 19.6 L4.8 22' fill='none' stroke='#048bb0' stroke-width='1'/></svg><svg class='ic' style='left:155px;top:139px' viewBox='0 0 26 26'><path d='M1.5 7 L11.5 14.5 L1.5 22Z' fill='#048bb0' stroke='#048bb0' stroke-width='1'/><path d='M24.5 7 L14.5 14.5 L24.5 22Z' fill='none' stroke='#048bb0' stroke-width='1.1'/><path d='M13 3 V26' stroke='#048bb0' stroke-width='1.2'/><path d='M5.5 5.5 A9.5 9.5 0 0 1 21 5.5 M18 5.6 L21.3 6 L21.5 2.5' fill='none' stroke='#048bb0' stroke-width='1'/></svg><svg class='ic' style='left:191px;top:139px' viewBox='0 0 26 26'><path d='M4 1 L12 11 L20 1Z' fill='#048bb0' stroke='#048bb0' stroke-width='1'/><path d='M4 25 L12 15 L20 25Z' fill='none' stroke='#048bb0' stroke-width='1.1'/><path d='M0 13 H22' stroke='#048bb0' stroke-width='1.2'/><path d='M20.5 5.5 A9.5 9.5 0 0 1 20.5 20.5 M20.3 17.2 L20 20.8 L23.5 21' fill='none' stroke='#048bb0' stroke-width='1'/></svg><svg class='ic' style='left:11px;top:175px' viewBox='0 0 26 26'><path d='M13.5 4.2 A10.2 10.2 0 1 1 6.2 7' fill='none' stroke='#048bb0' stroke-width='2.2'/><path d='M13.8 .2 V8.2 L8 4.2Z' fill='#048bb0'/><circle cx='13' cy='14.2' r='3.2' fill='none' stroke='#048bb0' stroke-width='1.6'/><path d='M15.96 15.42 L17.99 16.27 M14.22 17.16 L15.07 19.19 M11.78 17.16 L10.93 19.19 M10.04 15.42 L8.01 16.27 M10.04 12.98 L8.01 12.13 M11.78 11.24 L10.93 9.21 M14.22 11.24 L15.07 9.21 M15.96 12.98 L17.99 12.13 ' stroke='#048bb0' stroke-width='2.1'/></svg><svg class='ic' style='left:47px;top:175px' viewBox='0 0 26 26'><path d='M17.5 4 A8.4 8.4 0 1 1 11 5.5' fill='none' stroke='#048bb0' stroke-width='1.8'/><path d='M17.6 .3 V7.6 L12.6 4Z' fill='#048bb0'/><circle cx='17' cy='12.2' r='2.7' fill='none' stroke='#048bb0' stroke-width='1.3'/><path d='M19.49 13.23 L21.53 14.08 M18.03 14.69 L18.88 16.73 M15.97 14.69 L15.12 16.73 M14.51 13.23 L12.47 14.08 M14.51 11.17 L12.47 10.32 M15.97 9.71 L15.12 7.67 M18.03 9.71 L18.88 7.67 M19.49 11.17 L21.53 10.32 ' stroke='#048bb0' stroke-width='1.8'/><circle cx='6.5' cy='19' r='3.3' fill='#048bb0'/><path d='M6.5 13.5 V15 M1 19 H2.5 M2.6 15 L3.7 16.1 M2.6 23 L3.7 21.9 M6.5 23 V24.6 M10.4 23 L9.4 22' stroke='#048bb0' stroke-width='1.1'/></svg><svg class='ic' style='left:83px;top:175px' viewBox='0 0 26 26'><path d='M13 2 V24' stroke='#048bb0' stroke-width='1.4'/><path d='M9 6.5 L13 1.5 L17 6.5 M9 19.5 L13 24.5 L17 19.5' fill='none' stroke='#048bb0' stroke-width='1.4'/><path d='M5 13 H21' stroke='#048bb0' stroke-width='2.2'/></svg><svg class='ic' style='left:119px;top:175px' viewBox='0 0 26 26'><path d='M13 1 V10.5 M13 15.5 V25' stroke='#048bb0' stroke-width='1.3'/><path d='M9.5 7.5 L13 11.5 L16.5 7.5 M9.5 18.5 L13 14.5 L16.5 18.5' fill='none' stroke='#048bb0' stroke-width='1.3'/><path d='M5 13 H21' stroke='#048bb0' stroke-width='1.2'/></svg><svg class='ic' style='left:155px;top:175px' viewBox='0 0 26 26'><circle cx='13' cy='3.3' r='2.8' fill='#048bb0'/><path d='M8.5 8 Q8.5 7 10 7 H16 Q17.5 7 17.5 8 V10.5 H8.5Z M8.5 12.3 H17.5 V16 Q17.5 17 16 17.2 V26 H10 V17.2 Q8.5 17 8.5 16Z' fill='#048bb0'/><path d='M6.5 11.4 H19.5' stroke='#048bb0' stroke-width='.9'/></svg><svg class='ic' style='left:191px;top:175px' viewBox='0 0 26 26'><path d='M7.500 22.500 V4.500 M3 9.500 L7.500 4 L12 9.500' fill='none' stroke='#048bb0' stroke-width='3.200' stroke-linecap='round' stroke-linejoin='round'/><path d='M18.500 3.500 V21.500 M14 16.500 L18.500 22 L23 16.500' fill='none' stroke='#048bb0' stroke-width='3.200' stroke-linecap='round' stroke-linejoin='round'/></svg><svg class='ic' style='left:11px;top:211px' viewBox='0 0 26 26'><path d='M1 17 L16.5 3 L25 1 L25 9.5 L10 25.5Z' fill='#fff' stroke='#048bb0' stroke-width='1.8' stroke-linejoin='round'/><circle cx='19.8' cy='6.2' r='2.3' fill='none' stroke='#048bb0' stroke-width='1.3'/><path d='M7.5 16 L12 21 M9.5 14.3 L14 19.2 M11.5 12.6 L16 17.5' stroke='#048bb0' stroke-width='1.4'/></svg><svg class='ic' style='left:47px;top:211px' viewBox='0 0 26 26'><rect x='0' y='0' width='26' height='26' fill='#048bb0'/><text x='13' y='18.800' font-family='Liberation Sans, sans-serif' font-weight='bold' font-size='16' fill='#fff' text-anchor='middle' textLength='21.500' lengthAdjust='spacingAndGlyphs'>DT</text></svg><svg class='ic' style='left:83px;top:211px' viewBox='0 0 26 26'><text x='12.300' y='22.400' font-family='Liberation Sans, sans-serif' font-weight='bold' font-size='28.500' fill='#0a3346' text-anchor='middle' textLength='23' lengthAdjust='spacingAndGlyphs' filter='url(#sh3d)'>3D</text></svg><svg class='ic' style='left:119px;top:211px' viewBox='0 0 26 26'><rect x='3' y='3' width='20' height='20' fill='none' stroke='#b4dde9' stroke-width='1.1'/><g fill='#b4dde9'><rect x='11.2' y='1.2' width='3.6' height='3.6'/><rect x='11.2' y='21.2' width='3.6' height='3.6'/><rect x='1.2' y='11.2' width='3.6' height='3.6'/><rect x='21.2' y='11.2' width='3.6' height='3.6'/><rect x='11.2' y='11.2' width='3.6' height='3.6'/></g></svg><svg class='ic' style='left:155px;top:211px' viewBox='0 0 26 26'><rect x='3' y='3.5' width='19.5' height='19.5' fill='none' stroke='#b4dde9' stroke-width='1.1'/><path d='M.5 25.5 L25.5 .5' stroke='#b4dde9' stroke-width='1'/><g fill='#b4dde9'><rect x='11' y='2' width='3.4' height='3'/><rect x='11' y='21.5' width='3.4' height='3'/><rect x='1.5' y='11.5' width='3' height='3.4'/><rect x='21' y='11.5' width='3' height='3.4'/></g></svg><svg class='ic' style='left:191px;top:211px' viewBox='0 0 26 26'><g transform='translate(3.5 0) scale(.86)'><path d='M4.5 19 L16.5 5.5 Q15.5 2.5 18 1.5 Q20.5 1 21 3.5 Q24 4 23.5 6.5 Q22.5 9 19.5 8 L7.5 21.5 Q8.5 24.5 6 25 Q3.5 25.5 3.5 23 Q.5 22.5 1.5 20 Q2.5 18 4.5 19Z' fill='none' stroke='#b4dde9' stroke-width='1.3'/></g><path d='M6 8.5 Q17 6.5 16.5 17.5' fill='none' stroke='#b5c8cf' stroke-width='1.8'/><path d='M3.5 8.8 L8.5 5.8 L8.5 11.5Z' fill='#b5c8cf'/></svg><svg class='ic' style='left:11px;top:247px' viewBox='0 0 26 26'><path d='M8 2 Q14 -1 21 4.5 Q26.5 9.5 24 18 Q21.5 25.5 16 23.5 Q12 21.5 11.5 18 Q10 15 6 17 Q1 18.5 1.5 12 Q2.5 5.5 8 2Z' fill='none' stroke='#b4dde9' stroke-width='1.1'/><path d='M8.5 9.5 Q17 8.5 16.5 19' fill='none' stroke='#b5c8cf' stroke-width='1.8'/><path d='M5.5 9.7 L10.5 6.5 L10.5 12.6Z' fill='#b5c8cf'/></svg><svg class='ic' style='left:47px;top:247px' viewBox='0 0 26 26'><rect x='2' y='2.500' width='18.500' height='18.500' rx='2.500' fill='none' stroke='#048bb0' stroke-width='1.500'/><path d='M3 15.500 L8 10.500 L11.500 13.500 L14.500 11 L19.500 15' fill='none' stroke='#048bb0' stroke-width='1.400'/><circle cx='10.500' cy='7.500' r='1.400' fill='#048bb0'/><circle cx='20' cy='19.500' r='4.400' fill='#fff' stroke='#048bb0' stroke-width='1.100'/><path d='M20 17 V20.500 M18 19.500 L20 22 L22 19.500Z' fill='#048bb0' stroke='#048bb0' stroke-width='1.100'/></svg><svg class='ic' style='left:83px;top:247px' viewBox='0 0 26 26'><rect x='1' y='1.5' width='23' height='22.5' rx='1.5' fill='#048bb0'/><rect x='3' y='3.5' width='19' height='17' fill='#fff'/><path d='M3 20.5 V17 L10.5 9 L16 15 L18 13.5 L22 17.5 V20.5Z' fill='#048bb0'/><circle cx='17.2' cy='7.8' r='1.9' fill='#048bb0'/><rect x='14.5' y='16.5' width='9.5' height='9' rx='1.6' fill='#048bb0' stroke='#fff' stroke-width='1.3'/><rect x='16.8' y='17.3' width='4.8' height='2.6' fill='#fff'/><rect x='17' y='21.8' width='4.4' height='3' fill='#fff'/></svg><svg class='ic' style='left:119px;top:247px' viewBox='0 0 26 26'><ellipse cx='10.5' cy='9.5' rx='4.6' ry='5.6' fill='#048bb0'/><path d='M0 25.5 Q.5 19 5.5 17.5 L7.5 16.3 Q10.5 18.5 13.5 16.3 L15.5 17.5 Q20.5 19 21 25.5Z' fill='#048bb0'/><text x='22.200' y='13' font-family='Liberation Sans, sans-serif' font-weight='bold' font-size='17' fill='#048bb0' text-anchor='middle'>?</text></svg><div class='sec' style='top:288px'></div><div class='sh' style='top:297px'>Layouts</div><svg style='left:204px;top:299px' width='16' height='10' viewBox='0 0 16 10'><path d='M1.5 8.5 L8 2 L14.5 8.5' fill='none' stroke='#1a1a1a' stroke-width='2.2'/></svg><div class='selb' style='left:81px;top:327px'></div><svg class='ic' style='left:11px;top:329px' viewBox='0 0 26 26'><rect x='0' y='0' width='26' height='26' fill='#048bb0'/></svg><svg class='ic' style='left:47px;top:329px' viewBox='0 0 26 26'><rect x='0' y='0' width='11.5' height='26' fill='#048bb0'/><rect x='14.5' y='0' width='11.5' height='26' fill='#048bb0'/></svg><svg class='ic' style='left:83px;top:329px' viewBox='0 0 26 26'><rect x='0.5' y='0' width='7' height='26' fill='#048bb0'/><rect x='9.5' y='0' width='7' height='26' fill='#048bb0'/><rect x='18.5' y='0' width='7' height='26' fill='#048bb0'/></svg><svg class='ic' style='left:119px;top:329px' viewBox='0 0 26 26'><rect x='0' y='0' width='26' height='11.5' fill='#048bb0'/><rect x='0' y='14.5' width='26' height='11.5' fill='#048bb0'/></svg><svg class='ic' style='left:155px;top:329px' viewBox='0 0 26 26'><rect x='0' y='0' width='11.5' height='11.5' fill='#048bb0'/><rect x='14.5' y='0' width='11.5' height='11.5' fill='#048bb0'/><rect x='0' y='14.5' width='11.5' height='11.5' fill='#048bb0'/><rect x='14.5' y='14.5' width='11.5' height='11.5' fill='#048bb0'/></svg><svg class='ic' style='left:191px;top:329px' viewBox='0 0 26 26'><rect x='0' y='0' width='6.6' height='6.6' fill='#048bb0'/><rect x='0' y='9.7' width='6.6' height='6.6' fill='#048bb0'/><rect x='0' y='19.4' width='6.6' height='6.6' fill='#048bb0'/><rect x='9.7' y='0' width='6.6' height='6.6' fill='#048bb0'/><rect x='9.7' y='9.7' width='6.6' height='6.6' fill='#048bb0'/><rect x='9.7' y='19.4' width='6.6' height='6.6' fill='#048bb0'/><rect x='19.4' y='0' width='6.6' height='6.6' fill='#048bb0'/><rect x='19.4' y='9.7' width='6.6' height='6.6' fill='#048bb0'/><rect x='19.4' y='19.4' width='6.6' height='6.6' fill='#048bb0'/></svg><svg class='ic' style='left:11px;top:365px' viewBox='0 0 26 26'><rect x='0' y='0' width='26' height='11.3' fill='#048bb0'/><rect x='0' y='14.7' width='11.3' height='11.3' fill='#048bb0'/><rect x='14.7' y='14.7' width='11.3' height='11.3' fill='#048bb0'/></svg><svg class='ic' style='left:47px;top:365px' viewBox='0 0 26 26'><rect x='0.3' y='0' width='11' height='26' fill='#048bb0'/><rect x='14.3' y='0' width='11' height='11.3' fill='#048bb0'/><rect x='14.3' y='14.7' width='11' height='11.3' fill='#048bb0'/></svg><div class='sec' style='top:406px'></div><div class='sh' style='top:415px'>MPR</div><svg style='left:204px;top:417px' width='16' height='10' viewBox='0 0 16 10'><path d='M1.5 8.5 L8 2 L14.5 8.5' fill='none' stroke='#1a1a1a' stroke-width='2.2'/></svg><div class='selb' style='left:9px;top:445px'></div><svg class='ic' style='left:11px;top:447px' viewBox='0 0 26 26'><rect x='1' y='1' width='24' height='24' fill='#dff1fb' stroke='#048bb0' stroke-width='1.6'/></svg><svg class='ic' style='left:47px;top:447px' viewBox='0 0 26 26'><rect x='1.5' y='1.5' width='23' height='11' fill='none' stroke='#048bb0' stroke-width='1.2'/><rect x='1.5' y='15.5' width='10' height='8.5' fill='none' stroke='#048bb0' stroke-width='1.2'/><rect x='14.5' y='15.5' width='10' height='8.5' fill='none' stroke='#048bb0' stroke-width='1.2'/></svg><svg class='ic' style='left:83px;top:447px' viewBox='0 0 26 26'><rect x='1.5' y='1.5' width='11.5' height='23' fill='none' stroke='#048bb0' stroke-width='1.2'/><rect x='16.5' y='1.5' width='8' height='8.5' fill='none' stroke='#048bb0' stroke-width='1.2'/><rect x='16.5' y='14.5' width='8' height='10' fill='none' stroke='#048bb0' stroke-width='1.2'/></svg><svg class='ic' style='left:119px;top:447px' viewBox='0 0 26 26'><rect x='1.5' y='1.5' width='6' height='23' fill='none' stroke='#048bb0' stroke-width='1.1'/><rect x='10' y='1.5' width='6' height='23' fill='none' stroke='#048bb0' stroke-width='1.1'/><rect x='18.5' y='1.5' width='6' height='23' fill='none' stroke='#048bb0' stroke-width='1.1'/></svg><svg class='ic' style='left:155px;top:447px' viewBox='0 0 26 26'><rect x='1.5' y='1.5' width='23' height='6' fill='none' stroke='#048bb0' stroke-width='1.1'/><rect x='1.5' y='10' width='23' height='6' fill='none' stroke='#048bb0' stroke-width='1.1'/><rect x='1.5' y='18.5' width='23' height='6' fill='none' stroke='#048bb0' stroke-width='1.1'/></svg><svg class='ic' style='left:191px;top:447px' viewBox='0 0 26 26'><path d='M2 2 L24 24 M24 2 L2 24' stroke='#048bb0' stroke-width='1.6'/><circle cx='13' cy='13' r='3.6' fill='#048bb0'/></svg><svg class='ic' style='left:11px;top:483px' viewBox='0 0 26 26'><path d='M13 .800 Q21.800 .800 22.200 10 Q24.600 10.300 24.200 13.500 Q23.800 16.300 21.800 16.500 Q20.500 22.500 15 25.200 Q13 26 11 25.200 Q5.500 22.500 4.200 16.500 Q2.200 16.300 1.800 13.500 Q1.400 10.300 3.800 10 Q4.200 .800 13 .800Z' fill='none' stroke='#048bb0' stroke-width='1.500'/><path d='M8.300 11.200 H11.500 M14.500 11.200 H17.700' stroke='#048bb0' stroke-width='1.500' stroke-linecap='round'/></svg><svg class='ic' style='left:47px;top:483px' viewBox='0 0 26 26'><path d='M13 .800 Q21.800 .800 22.200 10 Q24.600 10.300 24.200 13.500 Q23.800 16.300 21.800 16.500 Q20.500 22.500 15 25.200 Q13 26 11 25.200 Q5.500 22.500 4.200 16.500 Q2.200 16.300 1.800 13.500 Q1.400 10.300 3.800 10 Q4.200 .800 13 .800Z' fill='none' stroke='#048bb0' stroke-width='1.500'/></svg><svg class='ic' style='left:83px;top:483px' viewBox='0 0 26 26'><path d='M9.100 25.200 H20.400 L20 20.200 Q24.800 16.500 24.800 10.500 Q24.400 1 14.500 .800 Q6.400 1.200 5.600 8.600 L5.400 11.200 L2.400 15.600 L4.900 16.400 L4.700 19.200 L5.600 19.800 L5.100 21.600 Q5.600 23 8.800 22.600Z' fill='none' stroke='#048bb0' stroke-width='1.500' stroke-linejoin='round'/><circle cx='9.100' cy='9.600' r='1.100' fill='#048bb0'/></svg><svg class='ic' style='left:119px;top:483px' viewBox='0 0 26 26'><g transform='translate(26 0) scale(-1 1)'><path d='M9.100 25.200 H20.400 L20 20.200 Q24.800 16.500 24.800 10.500 Q24.400 1 14.500 .800 Q6.400 1.200 5.600 8.600 L5.400 11.200 L2.400 15.600 L4.900 16.400 L4.700 19.200 L5.600 19.800 L5.100 21.600 Q5.600 23 8.800 22.600Z' fill='none' stroke='#048bb0' stroke-width='1.500' stroke-linejoin='round'/><circle cx='9.100' cy='9.600' r='1.100' fill='#048bb0'/></g></svg><svg class='ic' style='left:155px;top:483px' viewBox='0 0 26 26'><circle cx='13.500' cy='14.500' r='10.200' fill='none' stroke='#048bb0' stroke-width='1.500'/><path d='M11.800 4.600 L13.500 1 L15.200 4.600' fill='#048bb0' stroke='#048bb0' stroke-width='1' stroke-linejoin='round'/><path d='M3.500 12 Q1.800 13.500 3.500 15.500 M23.500 12 Q25.200 13.500 23.500 15.500' fill='none' stroke='#048bb0' stroke-width='1.400'/></svg><svg class='ic' style='left:191px;top:483px' viewBox='0 0 26 26'><g transform='translate(0 .300) scale(1 .900)'><path d='M3.5 9 Q7 6 10.5 9 Q12 13 9.5 17 Q9 20 10 22.5 Q10 25.5 7 25.5 Q4 25.5 4 22 Q5 18 3.5 15 Q2 12 3.5 9Z' fill='none' stroke='#048bb0' stroke-width='1.400'/><g fill='#048bb0'><circle cx='9.7' cy='4.3' r='1.6'/><circle cx='6.8' cy='3.5' r='1.1'/><circle cx='4.6' cy='4.2' r='.9'/><circle cx='2.8' cy='5.5' r='.8'/><circle cx='1.4' cy='7.2' r='.7'/></g><g transform='translate(26 0) scale(-1 1)'><path d='M3.5 9 Q7 6 10.5 9 Q12 13 9.5 17 Q9 20 10 22.5 Q10 25.5 7 25.5 Q4 25.5 4 22 Q5 18 3.5 15 Q2 12 3.5 9Z' fill='none' stroke='#048bb0' stroke-width='1.400'/><g fill='#048bb0'><circle cx='9.7' cy='4.3' r='1.6'/><circle cx='6.8' cy='3.5' r='1.1'/><circle cx='4.6' cy='4.2' r='.9'/><circle cx='2.8' cy='5.5' r='.8'/><circle cx='1.4' cy='7.2' r='.7'/></g></g></g></svg><div class='selb' style='left:9px;top:517px'></div><svg class='ic' style='left:11px;top:519px' viewBox='0 0 26 26'><text x='13' y='9.700' font-family='Liberation Sans, sans-serif' font-weight='bold' font-size='11.300' fill='#048bb0' text-anchor='middle'>MAX</text><text x='13' y='23.600' font-family='Liberation Sans, sans-serif' font-weight='bold' font-size='11.300' fill='#048bb0' text-anchor='middle'>IP</text></svg><svg class='ic' style='left:47px;top:519px' viewBox='0 0 26 26'><text x='13' y='9.700' font-family='Liberation Sans, sans-serif' font-weight='bold' font-size='11.300' fill='#048bb0' text-anchor='middle'>MIN</text><text x='13' y='23.600' font-family='Liberation Sans, sans-serif' font-weight='bold' font-size='11.300' fill='#048bb0' text-anchor='middle'>IP</text></svg><svg class='ic' style='left:83px;top:519px' viewBox='0 0 26 26'><text x='13' y='9.700' font-family='Liberation Sans, sans-serif' font-weight='bold' font-size='11.300' fill='#048bb0' text-anchor='middle'>AVG</text><text x='13' y='23.600' font-family='Liberation Sans, sans-serif' font-weight='bold' font-size='11.300' fill='#048bb0' text-anchor='middle'>IP</text></svg><div class='sec' style='top:560px'></div><div class='sh' style='top:569px'>Window Level Presets 2D</div><svg style='left:204px;top:571px' width='16' height='10' viewBox='0 0 16 10'><path d='M1.5 8.5 L8 2 L14.5 8.5' fill='none' stroke='#1a1a1a' stroke-width='2.2'/></svg><svg class='ic' style='left:11px;top:601px' viewBox='0 0 26 26'><polygon points='13.00,0.40 16.67,4.13 21.91,4.09 21.87,9.33 25.60,13.00 21.87,16.67 21.91,21.91 16.67,21.87 13.00,25.60 9.33,21.87 4.09,21.91 4.13,16.67 0.40,13.00 4.13,9.33 4.09,4.09 9.33,4.13' fill='#048bb0'/><path d='M13 5.8 A7.2 7.2 0 0 1 13 20.2Z' fill='#fff'/></svg><svg class='ic' style='left:47px;top:601px' viewBox='0 0 26 26'><polygon points='13.00,0.40 16.67,4.13 21.91,4.09 21.87,9.33 25.60,13.00 21.87,16.67 21.91,21.91 16.67,21.87 13.00,25.60 9.33,21.87 4.09,21.91 4.13,16.67 0.40,13.00 4.13,9.33 4.09,4.09 9.33,4.13' fill='#048bb0'/><path d='M13 5.8 A7.2 7.2 0 0 1 13 20.2Z' fill='#fff'/></svg><svg class='ic' style='left:83px;top:601px' viewBox='0 0 26 26'><polygon points='13.00,0.40 16.67,4.13 21.91,4.09 21.87,9.33 25.60,13.00 21.87,16.67 21.91,21.91 16.67,21.87 13.00,25.60 9.33,21.87 4.09,21.91 4.13,16.67 0.40,13.00 4.13,9.33 4.09,4.09 9.33,4.13' fill='#048bb0'/><path d='M13 5.8 A7.2 7.2 0 0 1 13 20.2Z' fill='#fff'/></svg><svg class='ic' style='left:119px;top:601px' viewBox='0 0 26 26'><polygon points='13.00,0.40 16.67,4.13 21.91,4.09 21.87,9.33 25.60,13.00 21.87,16.67 21.91,21.91 16.67,21.87 13.00,25.60 9.33,21.87 4.09,21.91 4.13,16.67 0.40,13.00 4.13,9.33 4.09,4.09 9.33,4.13' fill='#048bb0'/><path d='M13 5.8 A7.2 7.2 0 0 1 13 20.2Z' fill='#fff'/></svg><svg class='ic' style='left:155px;top:601px' viewBox='0 0 26 26'><polygon points='13.00,0.40 16.67,4.13 21.91,4.09 21.87,9.33 25.60,13.00 21.87,16.67 21.91,21.91 16.67,21.87 13.00,25.60 9.33,21.87 4.09,21.91 4.13,16.67 0.40,13.00 4.13,9.33 4.09,4.09 9.33,4.13' fill='#048bb0'/><path d='M13 5.8 A7.2 7.2 0 0 1 13 20.2Z' fill='#fff'/></svg><svg class='ic' style='left:191px;top:601px' viewBox='0 0 26 26'><polygon points='13.00,0.40 16.67,4.13 21.91,4.09 21.87,9.33 25.60,13.00 21.87,16.67 21.91,21.91 16.67,21.87 13.00,25.60 9.33,21.87 4.09,21.91 4.13,16.67 0.40,13.00 4.13,9.33 4.09,4.09 9.33,4.13' fill='#048bb0'/><path d='M13 5.8 A7.2 7.2 0 0 1 13 20.2Z' fill='#fff'/></svg><div class='sec' style='top:643px'></div></div><div class='abs' style='left:301px;top:213px;width:11px;height:645px;background:#f0f0f0'></div><div class='abs' style='left:303px;top:339px;width:7px;height:374px;background:#005f85'></div><svg style='left:303px;top:217px' width='7' height='4'><path d='M0 4 L3.5 0 L7 4Z' fill='#005f85'/></svg><svg style='left:303px;top:850px' width='7' height='4'><path d='M0 0 L3.5 4 L7 0Z' fill='#005f85'/></svg>
<div class='abs' id='vtool'></div><div class='vsel' style='top:346px'></div><div class='vsel' style='top:706px'></div><svg style='left:324.0px;top:135.0px;filter:drop-shadow(0 0 .35px #fff)' width='22' height='22' viewBox='0 0 26 26'><path d='M12.500 4 L4.500 13 L12.500 22 M21.500 4 L13.500 13 L21.500 22' fill='none' stroke='#fff' stroke-width='2'/></svg><svg style='left:324.0px;top:171.0px;filter:drop-shadow(0 0 .35px #fff)' width='22' height='22' viewBox='0 0 26 26'><path d='M0 0 H14.500 L22 7.5 V20 Q19 16.5 15.5 18.5 Q12.500 20.5 14.500 25.500 H0Z' fill='#fff'/><path d='M14.500 0 V7.5 H22' fill='none' stroke='#000' stroke-width='1.2'/><path d='M4 6 H10 M4 10.5 H18 M4 15 H18 M4 19.500 H12' stroke='#000' stroke-width='1.5'/><path d='M13.500 22.500 Q20 15 26.500 22.500 Q20 29 13.500 22.500Z' fill='#000' stroke='#fff' stroke-width='1.2'/><circle cx='20' cy='22' r='2.8' fill='none' stroke='#fff' stroke-width='1.1'/></svg><svg style='left:324.0px;top:207.0px;filter:drop-shadow(0 0 .35px #fff)' width='22' height='22' viewBox='0 0 26 26'><g transform='rotate(-38 13 13)'><rect x='-2' y='8.5' width='30' height='9' fill='none' stroke='#fff' stroke-width='1.5'/><path d='M2.5 8.5 V12.5' stroke='#fff' stroke-width='1.1'/><path d='M6.7 8.5 V11.5' stroke='#fff' stroke-width='1.1'/><path d='M10.9 8.5 V12.5' stroke='#fff' stroke-width='1.1'/><path d='M15.100000000000001 8.5 V11.5' stroke='#fff' stroke-width='1.1'/><path d='M19.3 8.5 V12.5' stroke='#fff' stroke-width='1.1'/><path d='M23.5 8.5 V11.5' stroke='#fff' stroke-width='1.1'/></g></svg><svg style='left:324.0px;top:243.0px;filter:drop-shadow(0 0 .35px #fff)' width='22' height='22' viewBox='0 0 26 26'><path d='M24 4 L2 21.5 H25.500' fill='none' stroke='#fff' stroke-width='1.8'/><path d='M11 14.500 Q15 17 14.500 21.500' fill='none' stroke='#fff' stroke-width='1.1'/></svg><svg style='left:324.0px;top:279.0px;filter:drop-shadow(0 0 .35px #fff)' width='22' height='22' viewBox='0 0 26 26'><ellipse cx='13' cy='13.5' rx='12' ry='8' fill='none' stroke='#fff' stroke-width='1.2'/></svg><svg style='left:324.0px;top:314.0px;filter:drop-shadow(0 0 .35px #fff)' width='22' height='22' viewBox='0 0 26 26'><g transform='rotate(-40 13 10.500)'><rect x='3.500' y='5' width='19' height='11' rx='1.800' fill='none' stroke='#fff' stroke-width='1.600'/><rect x='12' y='5' width='10.500' height='11' rx='1.800' fill='#fff'/></g><path d='M2 24.500 H24.500' stroke='#fff' stroke-width='1.700'/></svg><svg style='left:324.0px;top:351.0px;filter:drop-shadow(0 0 .35px #fff)' width='22' height='22' viewBox='0 0 26 26'><circle cx='13' cy='13' r='6' fill='none' stroke='#fff' stroke-width='1.9'/><path d='M13 7 A6 6 0 0 0 13 19Z' fill='#fff'/><path d='M21.80 13.00 L25.40 13.00 M19.22 19.22 L21.77 21.77 M13.00 21.80 L13.00 25.40 M6.78 19.22 L4.23 21.77 M4.20 13.00 L0.60 13.00 M6.78 6.78 L4.23 4.23 M13.00 4.20 L13.00 0.60 M19.22 6.78 L21.77 4.23 ' stroke='#fff' stroke-width='1.9' fill='none'/></svg><svg style='left:324.0px;top:387.0px;filter:drop-shadow(0 0 .35px #fff)' width='22' height='22' viewBox='0 0 26 26'><path d='M13 2 V24 M2 13 H24' stroke='#fff' stroke-width='1.6' fill='none'/><path d='M9 6 L13 1.5 L17 6 M9 20 L13 24.5 L17 20 M6 9 L1.5 13 L6 17 M20 9 L24.5 13 L20 17' stroke='#fff' stroke-width='1.6' fill='none'/></svg><svg style='left:324.0px;top:423.0px;filter:drop-shadow(0 0 .35px #fff)' width='22' height='22' viewBox='0 0 26 26'><circle cx='10' cy='10' r='8.6' fill='none' stroke='#fff' stroke-width='1.2'/><path d='M16.5 16.5 L24 24' stroke='#fff' stroke-width='3.2' stroke-linecap='round'/></svg><svg style='left:324.0px;top:459.0px;filter:drop-shadow(0 0 .35px #fff)' width='22' height='22' viewBox='0 0 26 26'><path d='M3.2 10.5 A10.2 10.2 0 0 1 22.5 9' fill='none' stroke='#fff' stroke-width='1.2'/><path d='M22.8 15.5 A10.2 10.2 0 0 1 3.5 17' fill='none' stroke='#fff' stroke-width='1.2'/><path d='M1.5 5.5 L3 11 L8.2 9.6' fill='none' stroke='#fff' stroke-width='1.2'/><path d='M24.5 20.5 L23 15 L17.8 16.4' fill='none' stroke='#fff' stroke-width='1.2'/></svg><svg style='left:324.0px;top:495.0px;filter:drop-shadow(0 0 .35px #fff)' width='22' height='22' viewBox='0 0 26 26'><path d='M13 2 V24' stroke='#fff' stroke-width='1.4'/><path d='M9 6.5 L13 1.5 L17 6.5 M9 19.5 L13 24.5 L17 19.5' fill='none' stroke='#fff' stroke-width='1.4'/><rect x='10.6' y='10.6' width='4.8' height='4.8' fill='#fff'/></svg><svg style='left:324.0px;top:531.0px;filter:drop-shadow(0 0 .35px #fff)' width='22' height='22' viewBox='0 0 26 26'><path d='M13 .500 L20 8 H6Z M13 25.500 L20 18 H6Z' fill='#fff'/><path d='M6 10.300 H20 M6 13 H20 M6 15.700 H20' stroke='#fff' stroke-width='1.500'/></svg><svg style='left:324.0px;top:567.0px;filter:drop-shadow(0 0 .35px #fff)' width='22' height='22' viewBox='0 0 26 26'><path d='M13.5 4.2 A10.2 10.2 0 1 1 6.2 7' fill='none' stroke='#fff' stroke-width='2.2'/><path d='M13.8 .2 V8.2 L8 4.2Z' fill='#fff'/><circle cx='13' cy='14.2' r='3.2' fill='none' stroke='#fff' stroke-width='1.6'/><path d='M15.96 15.42 L17.99 16.27 M14.22 17.16 L15.07 19.19 M11.78 17.16 L10.93 19.19 M10.04 15.42 L8.01 16.27 M10.04 12.98 L8.01 12.13 M11.78 11.24 L10.93 9.21 M14.22 11.24 L15.07 9.21 M15.96 12.98 L17.99 12.13 ' stroke='#fff' stroke-width='2.1'/></svg><svg style='left:324.0px;top:603.0px;filter:drop-shadow(0 0 .35px #fff)' width='22' height='22' viewBox='0 0 26 26'><path d='M17.5 4 A8.4 8.4 0 1 1 11 5.5' fill='none' stroke='#fff' stroke-width='1.8'/><path d='M17.6 .3 V7.6 L12.6 4Z' fill='#fff'/><circle cx='17' cy='12.2' r='2.7' fill='none' stroke='#fff' stroke-width='1.3'/><path d='M19.49 13.23 L21.53 14.08 M18.03 14.69 L18.88 16.73 M15.97 14.69 L15.12 16.73 M14.51 13.23 L12.47 14.08 M14.51 11.17 L12.47 10.32 M15.97 9.71 L15.12 7.67 M18.03 9.71 L18.88 7.67 M19.49 11.17 L21.53 10.32 ' stroke='#fff' stroke-width='1.8'/><circle cx='6.5' cy='19' r='3.3' fill='#fff'/><path d='M6.5 13.5 V15 M1 19 H2.5 M2.6 15 L3.7 16.1 M2.6 23 L3.7 21.9 M6.5 23 V24.6 M10.4 23 L9.4 22' stroke='#fff' stroke-width='1.1'/></svg><div class='abs' style='left:324px;top:639px;width:22px;height:22px;background:#fff'></div><div class='abs' style='left:324px;top:675px;width:10px;height:22px;background:#fff'></div><div class='abs' style='left:336px;top:675px;width:10px;height:22px;background:#fff'></div><div class='abs' style='left:325px;top:712px;width:20px;height:20px;border:1px solid #fff'></div><svg style='left:324.0px;top:747.0px;' width='22' height='22' viewBox='0 0 26 26'><rect x='1.5' y='1.5' width='23' height='11' fill='none' stroke='#fff' stroke-width='1.2'/><rect x='1.5' y='15.5' width='10' height='8.5' fill='none' stroke='#fff' stroke-width='1.2'/><rect x='14.5' y='15.5' width='10' height='8.5' fill='none' stroke='#fff' stroke-width='1.2'/></svg><svg style='left:324.0px;top:783.0px;' width='22' height='22' viewBox='0 0 26 26'><rect x='1.5' y='1.5' width='11.5' height='23' fill='none' stroke='#fff' stroke-width='1.2'/><rect x='16.5' y='1.5' width='8' height='8.5' fill='none' stroke='#fff' stroke-width='1.2'/><rect x='16.5' y='14.5' width='8' height='10' fill='none' stroke='#fff' stroke-width='1.2'/></svg><svg style='left:324.0px;top:819.0px;' width='22' height='22' viewBox='0 0 26 26'><rect x='1.5' y='1.5' width='6' height='23' fill='none' stroke='#fff' stroke-width='1.1'/><rect x='10' y='1.5' width='6' height='23' fill='none' stroke='#fff' stroke-width='1.1'/><rect x='18.5' y='1.5' width='6' height='23' fill='none' stroke='#fff' stroke-width='1.1'/></svg><svg style='left:324.0px;top:855.0px;' width='22' height='22' viewBox='0 0 26 26'><rect x='1.5' y='1.5' width='23' height='6' fill='none' stroke='#fff' stroke-width='1.1'/><rect x='1.5' y='10' width='23' height='6' fill='none' stroke='#fff' stroke-width='1.1'/><rect x='1.5' y='18.5' width='23' height='6' fill='none' stroke='#fff' stroke-width='1.1'/></svg>
<div class='abs' style='left:353px;top:128px;width:1023px;height:710px;background:#444'></div><div class='abs' style='left:353px;top:838px;width:1026px;height:2px;background:#000'></div><div class='abs' style='left:353px;top:128px;width:340px;height:709px;background:#2a93ae'></div><div class='abs' style='left:355px;top:130px;width:337px;height:706px;background:#555'></div><div class='abs' style='left:356px;top:131px;width:336px;height:705px;background:#000'></div><div class='abs' style='left:697px;top:837px;width:337px;height:1px;background:#0c0c14'></div><div class='abs' style='left:697px;top:131px;width:337px;height:706px;background:#000;border:1px solid #dc9200;border-right-width:2px;border-bottom-width:2px'></div><div class='abs' style='left:1038px;top:131px;width:336px;height:705px;background:#000'></div><svg width='0' height='0' style='left:0;top:0'><defs><filter id='ctn' x='0' y='0' width='100%' height='100%' color-interpolation-filters='sRGB'><feGaussianBlur in='SourceGraphic' stdDeviation='.45' result='b'/><feTurbulence type='fractalNoise' baseFrequency='.75' numOctaves='2' seed='4' result='n0'/><feColorMatrix in='n0' type='matrix' values='1.800 0 0 0 -.400  1.800 0 0 0 -.400  1.800 0 0 0 -.400  0 0 0 0 1' result='n'/><feComposite in='b' in2='n' operator='arithmetic' k1='.600' k2='.720' k3='.130' k4='-.065' result='m'/><feComposite in='m' in2='b' operator='in'/></filter><filter id='blr0' x='-10%' y='-10%' width='120%' height='120%'><feGaussianBlur stdDeviation='.45'/></filter><filter id='blr15' x='-50%' y='-50%' width='200%' height='200%'><feGaussianBlur stdDeviation='1.6'/></filter><filter id='blr' x='-10%' y='-10%' width='120%' height='120%'><feGaussianBlur stdDeviation='1.2'/></filter><filter id='blr2' x='-10%' y='-10%' width='120%' height='120%'><feGaussianBlur stdDeviation='2.2'/></filter><filter id='petn' x='0' y='0' width='100%' height='100%' color-interpolation-filters='sRGB'><feTurbulence type='fractalNoise' baseFrequency='.2' numOctaves='2' seed='11' result='n0'/><feColorMatrix in='n0' type='matrix' values='0 4.500 0 0 -2.150  0 4.500 0 0 -2.150  0 4.500 0 0 -2.150  0 0 0 0 1' result='n'/><feTurbulence type='fractalNoise' baseFrequency='.035' numOctaves='2' seed='5' result='l0'/><feColorMatrix in='l0' type='matrix' values='3 0 0 0 -.900  3 0 0 0 -.900  3 0 0 0 -.900  0 0 0 0 1' result='l'/><feComposite in='n' in2='l' operator='arithmetic' k1='1.100' k2='.250' k3='0' k4='.050' result='nl'/><feGaussianBlur in='nl' stdDeviation='1.9' result='nb'/><feComposite in='SourceGraphic' in2='nb' operator='arithmetic' k1='.950' k2='.045' k3='0' k4='0' result='m'/><feComposite in='m' in2='SourceGraphic' operator='in'/></filter><radialGradient id='petg' cx='.44' cy='.39' r='.6'><stop offset='0' stop-color='#fff'/><stop offset='.4' stop-color='#c4c4c4'/><stop offset='.68' stop-color='#707070'/><stop offset='.88' stop-color='#3c3c3c'/><stop offset='1' stop-color='#2c2c2c'/></radialGradient><filter id='sh3d' x='-10%' y='-10%' width='130%' height='120%'><feOffset in='SourceAlpha' dx='1.500' dy='0' result='o'/><feFlood flood-color='#1a86a8'/><feComposite in2='o' operator='in' result='sh'/><feMerge><feMergeNode in='sh'/><feMergeNode in='SourceGraphic'/></feMerge></filter></defs></svg><svg style='left:390px;top:365px' width='260' height='240' viewBox='0 0 260 240'><path d='M22 189.500 Q134 240.500 246 189.500 C250 192 250 197 246.500 199 Q134 267 21.500 199 C18 197 18 192 22 189.500Z' fill='#000' stroke='#cfcfcf' stroke-width='.65' stroke-dasharray='10 1.500 4 1.200'/><g filter='url(#ctn)'><path d='M12 150 C12 120 14 100 22 82 C33 56 52 36 80 23 C98 15 112 13.500 123 13.500 C140 13.500 158 16 172 22 C196 32 213 54 226 82 C236 105 243 130 243 152 C243 166 240 172 232 178 C214 191 170 205 131 206 C90 206 50 192 27 180 C16 174 12 165 12 150Z' fill='#202020'/><path d='M13 138 Q30 150 66 150 L100 168 L128 192 L156 168 L192 146 Q225 148 242 136 Q246 165 232 178 Q180 205 131 206 Q70 204 27 180 Q10 170 13 138Z' fill='#171717' filter='url(#blr)'/><clipPath id='bodyc'><path d='M12 150 C12 120 14 100 22 82 C33 56 52 36 80 23 C98 15 112 13.500 123 13.500 C140 13.500 158 16 172 22 C196 32 213 54 226 82 C236 105 243 130 243 152 C243 166 240 172 232 178 C214 191 170 205 131 206 C90 206 50 192 27 180 C16 174 12 165 12 150Z'/></clipPath><g clip-path='url(#bodyc)'><path d='M198.6 111.8L275.0 111.6M200.6 113.9L274.9 115.8M205.8 115.5L274.8 118.5M209.6 117.9L274.5 122.5M204.6 132.1L268.8 148.2M183.7 130.1L266.0 155.4M203.5 137.7L265.0 157.9M180.4 144.2L248.7 184.1M193.3 154.6L246.0 187.4M180.5 148.6L243.5 190.2M182.2 153.7L238.9 195.0M169.2 152.5L227.0 205.4M166.8 153.1L223.1 208.5M167.1 158.9L216.0 213.3M161.2 166.6L198.7 223.0M159.8 168.0L195.1 224.7M158.4 169.9L191.0 226.5M146.9 165.2L174.6 232.3M145.9 167.0L171.2 233.3M136.2 166.1L151.0 237.6M133.8 164.6L146.0 238.2M134.4 180.2L142.4 238.6M130.2 166.4L137.2 239.1M129.5 181.7L133.3 239.3M120.3 180.0L116.2 239.3M117.4 170.0L108.3 238.7M107.8 182.5L94.5 236.8M105.7 180.8L90.2 236.0M106.0 166.8L82.7 234.3M98.2 176.3L75.0 232.2M92.8 173.0L63.5 228.3M83.9 169.9L47.6 221.2M77.4 167.3L36.4 214.9M75.1 166.8L33.2 212.8M83.8 150.6L24.2 206.4M75.1 151.1L14.7 198.4M68.5 153.5L11.5 195.3M72.3 148.9L9.2 193.1M63.3 152.4L6.2 189.8M73.0 144.4L4.1 187.5M59.3 150.1L1.1 183.8M61.3 146.5L-1.5 180.5M57.7 144.4L-5.5 174.8M61.8 138.8L-9.3 168.8M49.0 141.2L-11.7 164.4M51.4 138.1L-13.4 161.1M53.4 130.2L-18.7 148.5M48.3 129.4L-19.9 144.9M47.4 117.7L-24.5 122.9M41.8 115.8L-24.8 118.9M60.5 112.2L-25.0 112.4M46.2 110.0L-24.9 108.2M55.2 108.7L-24.8 104.9M53.2 101.3L-22.7 90.0M44.2 98.0L-22.0 86.5M60.9 96.2L-19.1 76.5M60.5 94.1L-17.6 72.5M46.1 87.9L-16.2 68.9M63.6 89.9L-13.1 62.2M59.3 86.9L-11.8 59.7M62.9 86.3L-9.9 56.2M59.7 80.7L-5.6 49.3M71.8 79.2L3.6 37.1M74.0 76.3L9.3 30.9M64.5 64.4L14.9 25.4M76.6 71.6L17.9 22.7M81.8 74.0L20.8 20.3M79.7 69.7L24.0 17.7M74.7 62.6L26.9 15.6M80.0 65.4L29.8 13.5M81.7 61.4L36.7 8.9M81.6 58.3L40.0 6.9M80.6 52.7L44.5 4.4M87.7 51.7L55.2 -0.9M98.9 63.4L62.7 -4.0M109.6 55.9L91.0 -12.2M111.7 46.3L99.5 -13.6M116.3 50.7L107.1 -14.6M119.3 53.7L112.6 -15.1M122.5 43.0L120.5 -15.4M124.8 58.9L124.6 -15.5M127.5 45.6L129.8 -15.4M132.7 52.9L141.5 -14.7M135.6 49.6L146.4 -14.2M138.3 45.3L150.1 -13.7M147.8 45.5L166.9 -10.4M149.2 48.8L171.5 -9.2M151.0 50.8L175.9 -7.9M151.0 55.4L179.5 -6.8M161.7 49.4L191.9 -2.1M160.5 55.3L195.5 -0.6M157.3 63.2L198.5 0.9M168.0 51.4L202.5 2.8M167.1 56.8L206.7 5.0M171.3 58.1L213.5 9.0M174.9 60.0L219.9 13.2M164.8 72.6L222.7 15.3M168.1 71.8L226.0 17.8M176.3 67.3L229.8 20.8M173.6 72.0L232.8 23.3M176.7 71.9L235.8 26.1M184.2 68.8L238.8 29.0M172.4 80.7L243.5 33.8M176.6 80.4L246.7 37.4M178.7 80.5L248.5 39.6M179.0 82.4L251.1 42.9M179.8 83.6L253.1 45.6M177.6 86.5L255.2 48.7M193.6 81.2L257.6 52.4M187.7 85.7L259.5 55.6M184.7 89.2L261.8 59.7M183.8 92.4L264.7 65.5M204.2 90.1L267.6 72.5M191.4 97.3L270.1 79.8M184.5 101.4L271.8 85.9M185.0 103.0L272.7 89.8M206.7 102.1L273.5 94.1M208.2 106.3L274.5 101.7' stroke='#3c3c3c' stroke-width='.7' fill='none' opacity='.7'/><path d='M196.4 119.2L274.0 127.0M200.1 120.9L273.6 129.6M202.4 123.4L272.8 133.8M202.5 125.0L272.2 136.7M184.2 123.6L271.2 140.6M200.4 128.8L270.1 144.4M192.6 130.9L267.5 151.8M187.2 134.4L263.1 161.8M187.6 136.2L261.5 164.8M199.1 143.0L259.5 168.4M196.8 144.6L257.3 172.1M180.7 138.9L255.5 174.9M195.5 148.6L253.0 178.4M179.8 142.1L251.0 181.2M186.5 154.5L241.4 192.5M175.2 151.4L235.2 198.5M176.8 155.3L232.0 201.4M168.3 149.7L229.8 203.2M167.7 156.8L219.4 211.1M169.7 164.3L213.1 215.2M167.6 165.0L209.6 217.3M163.3 162.6L206.1 219.3M160.1 161.1L202.9 221.0M154.7 167.4L187.1 228.1M155.4 172.8L183.6 229.4M147.6 160.6L180.2 230.5M144.7 168.4L167.6 234.3M142.8 169.0L163.5 235.2M142.2 173.4L159.8 236.0M138.2 166.6L155.1 236.9M127.0 165.5L129.8 239.4M125.3 180.1L125.6 239.5M123.3 168.9L121.3 239.5M119.5 169.0L112.8 239.1M115.1 171.1L103.8 238.2M115.0 162.4L100.0 237.7M104.2 178.5L86.4 235.2M106.1 161.9L79.1 233.4M96.6 173.1L69.9 230.6M92.5 176.5L66.0 229.2M91.4 170.5L59.1 226.6M86.1 174.8L55.1 224.8M92.5 161.1L51.5 223.1M85.6 164.6L44.4 219.5M80.2 168.1L40.8 217.5M82.9 156.0L30.4 210.9M78.0 158.2L26.9 208.4M82.2 149.8L20.9 203.8M80.2 148.7L17.0 200.5M63.1 143.9L-3.3 178.0M60.2 141.3L-7.5 171.8M66.2 131.5L-14.8 158.3M47.5 135.3L-16.4 154.6M50.4 132.5L-17.8 151.2M64.2 124.3L-20.9 141.5M65.7 122.4L-21.9 137.8M45.2 124.1L-22.7 134.3M42.0 121.9L-23.6 129.6M64.5 117.7L-24.1 126.1M50.9 113.9L-24.9 115.9M63.1 107.5L-24.5 101.2M55.2 104.8L-23.9 96.7M48.5 102.9L-23.6 94.4M48.3 97.2L-21.3 83.7M56.3 96.6L-20.1 79.6M59.5 90.2L-14.6 65.4M68.9 86.6L-7.4 52.1M56.2 76.4L-3.1 45.7M59.4 76.2L-1.2 43.1M60.3 74.5L1.1 40.2M64.2 72.0L6.5 33.9M76.0 76.1L11.4 28.8M79.2 61.9L33.0 11.3M89.5 61.4L48.2 2.5M92.0 62.0L51.6 0.8M88.2 47.8L59.2 -2.6M94.5 51.0L66.4 -5.4M101.6 60.9L70.7 -6.8M103.4 60.4L74.8 -8.2M105.6 61.0L78.9 -9.3M105.5 56.4L82.1 -10.2M106.3 51.3L87.0 -11.3M109.1 47.2L94.5 -12.8M114.9 53.5L103.2 -14.2M120.7 49.6L116.3 -15.3M128.8 52.2L133.0 -15.3M132.0 45.4L138.4 -15.0M141.6 43.5L155.3 -12.9M141.6 50.9L158.8 -12.2M146.6 42.6L163.4 -11.3M148.7 64.3L183.4 -5.4M154.7 57.1L187.6 -3.9M167.6 59.5L210.2 7.1M176.1 56.1L217.0 11.3M181.6 72.5L241.0 31.1M184.1 90.8L263.2 62.3M188.0 93.0L266.4 69.5M188.9 95.9L268.8 75.7M207.1 95.9L271.2 83.4M196.5 105.4L274.1 98.2M200.0 108.2L274.7 104.4M192.3 110.1L274.9 107.7' stroke='#0e0e0e' stroke-width='.7' fill='none' opacity='.7'/></g><path d='M31 112 C30 80 56 44 96 31 M33.500 126 C29 100 40 62 76 40' fill='none' stroke='#3d3d3d' stroke-width='.9'/><path d='M37 108 C37 75 70 32 126 32 C170 32 205 60 222 88 C228 98 229.500 104 229.500 110 C229 124 214 135 197 141 L158 160 L152 150 L128 142 L104 150 L99 161 L68 145.500 C50 140 37.500 128 37 108Z' fill='#555'/><path d='M41 108 C41 77 73 35.500 126 35.500 C168 35.500 202 62 219 90 C224 99 226 104 226 110 C225 122 212 131 195 137 L150 128 L128 120 L106 128 L68 140 C54 134 41.500 126 41 108Z' fill='#4b4b4b'/><path d='M43 118 Q48 133 68 141 L100 158 L103 151 L72 135 Q56 129 49 116Z' fill='#1c1c1c'/><path d='M213.500 100 Q212 124 195 136 L158 155 L155 148 L189 131 Q205 122 210 100Z' fill='#1c1c1c'/><path d='M99 158 L157 158 L160 164 Q152 180 143 184 L128.500 189 L114 184 Q104 180 96 164Z' fill='#363636' filter='url(#blr)'/><path d='M128.500 172 L133 190 L128.500 196 L124 190Z' fill='#353535' filter='url(#blr)'/><path d='M93 44 Q100 36 112 37 Q124 33 136 37 Q146 38 147 46 Q150 56 146 66 Q140 76 130 80 Q120 84 114 76 Q104 72 100 62 Q92 56 93 44Z' fill='#1e1e1e'/><path d='M150 50 Q156 44 164 48 Q172 46 176 54 Q184 62 180 70 Q176 80 166 78 Q158 80 154 72 Q146 62 150 50Z' fill='#242424'/><path d='M82 77 Q92 84 94 98 Q93 110 86 116 Q82 112 87 101 Q88 90 80 81Z' fill='#181818'/><path d='M98 90 Q105 98 102 110 Q98 117 94 112 Q98 102 96 94Z' fill='#222'/><path d='M114 124 Q118 112 130 108 Q140 110 145 120 Q154 124 163 116 Q170 104 182 106 Q190 112 186 126 Q180 138 168 136 Q160 130 150 130 L140 124 L128 122 L118 130 L104 132 Q94 130 98 124 Q106 126 114 124Z' fill='#1b1b1b'/><path d='M60 132 Q76 128 92 134 L96 140 L70 138Z' fill='#202020'/><ellipse cx='95.6' cy='47' rx='4.3' ry='4.6' fill='#000'/><ellipse cx='97.5' cy='57' rx='5' ry='3.3' fill='#000'/><ellipse cx='112' cy='38.8' rx='5.5' ry='3.2' fill='#000'/><ellipse cx='125.6' cy='37.5' rx='6.5' ry='3.3' fill='#000'/><ellipse cx='137.5' cy='40' rx='4' ry='3.2' fill='#000'/><ellipse cx='144' cy='43' rx='2.6' ry='2.4' fill='#000'/><ellipse cx='103' cy='137.700' rx='9.500' ry='7.500' fill='#5a5a5a'/><ellipse cx='153' cy='135' rx='10.500' ry='7.500' fill='#5c5c5c'/><ellipse cx='127' cy='136.800' rx='14.500' ry='10.800' fill='#e4e4e4'/><ellipse cx='127' cy='137' rx='10.500' ry='7.500' fill='#c4c4c4'/><path d='M112 151 Q118 146.500 124.500 150 L125 157.500 Q118 160 112.500 156.500Z M131 149.500 Q137 145.500 143 149 L143 155 Q137 158.500 131.500 156.500Z' fill='#fafafa'/><path d='M127 155 L129 155 L129.800 170 L128.300 170Z' fill='#d0d0d0'/><path d='M143.500 148.500 L150 150' stroke='#ddd' stroke-width='1.200'/><path d='M68 144.500 L71.500 143 L100.500 157.500 L102.500 165 L96.500 164Z' fill='#fafafa'/><path d='M75 148 L96.500 159.500' stroke='#8e8e8e' stroke-width='1.400'/><path d='M195.500 139 L192 138 L158 155.500 L155.500 164.500 L161.500 163.500Z' fill='#fafafa'/><path d='M189.500 142 L162.500 158' stroke='#8e8e8e' stroke-width='1.400'/><path d='M12 150 C12 120 14 100 22 82 C33 56 52 36 80 23 C98 15 112 13.500 123 13.500 C140 13.500 158 16 172 22 C196 32 213 54 226 82 C236 105 243 130 243 152 C243 166 240 172 232 178 C214 191 170 205 131 206 C90 206 50 192 27 180 C16 174 12 165 12 150Z' fill='none' stroke='#8a8a8a' stroke-width='.9'/></g><g filter='url(#blr0)'><ellipse cx='75' cy='64.4' rx='6.2' ry='5.2' fill='#fff'/><ellipse cx='82' cy='67' rx='3.5' ry='2.8' fill='#fff'/><ellipse cx='97.5' cy='67.5' rx='6' ry='8' fill='#fff'/><ellipse cx='93' cy='72.5' rx='4.5' ry='3.5' fill='#fff'/><ellipse cx='103' cy='43' rx='2.5' ry='2.2' fill='#fff'/><ellipse cx='70' cy='81.2' rx='9' ry='5.5' fill='#fff'/><ellipse cx='78' cy='104.4' rx='7' ry='5' fill='#fff'/><ellipse cx='61' cy='118' rx='9' ry='8' fill='#fff'/><ellipse cx='72' cy='124' rx='9.5' ry='7' fill='#fff'/><ellipse cx='80.5' cy='119.5' rx='5' ry='5' fill='#fff'/><ellipse cx='68' cy='110' rx='4.5' ry='3.5' fill='#fff'/><ellipse cx='112' cy='43.800' rx='3.800' ry='1.800' fill='#fff'/><ellipse cx='127' cy='42' rx='2.600' ry='1.200' fill='#fff'/><path d='M179.500 118 L180.500 124 M181.500 126.500 L182.500 130' stroke='#fff' stroke-width='2' stroke-linecap='round'/></g></svg><svg style='left:731px;top:365px' width='260' height='240' viewBox='0 0 260 240'><path d='M22 189.500 Q134 240.500 246 189.500 C250 192 250 197 246.500 199 Q134 267 21.500 199 C18 197 18 192 22 189.500Z' fill='#000' stroke='#cfcfcf' stroke-width='.65' stroke-dasharray='10 1.500 4 1.200'/><g filter='url(#ctn)'><path d='M12 150 C12 120 14 100 22 82 C33 56 52 36 80 23 C98 15 112 13.500 123 13.500 C140 13.500 158 16 172 22 C196 32 213 54 226 82 C236 105 243 130 243 152 C243 166 240 172 232 178 C214 191 170 205 131 206 C90 206 50 192 27 180 C16 174 12 165 12 150Z' fill='#202020'/><path d='M13 138 Q30 150 66 150 L100 168 L128 192 L156 168 L192 146 Q225 148 242 136 Q246 165 232 178 Q180 205 131 206 Q70 204 27 180 Q10 170 13 138Z' fill='#171717' filter='url(#blr)'/><clipPath id='bodyc'><path d='M12 150 C12 120 14 100 22 82 C33 56 52 36 80 23 C98 15 112 13.500 123 13.500 C140 13.500 158 16 172 22 C196 32 213 54 226 82 C236 105 243 130 243 152 C243 166 240 172 232 178 C214 191 170 205 131 206 C90 206 50 192 27 180 C16 174 12 165 12 150Z'/></clipPath><g clip-path='url(#bodyc)'><path d='M198.6 111.8L275.0 111.6M200.6 113.9L274.9 115.8M205.8 115.5L274.8 118.5M209.6 117.9L274.5 122.5M204.6 132.1L268.8 148.2M183.7 130.1L266.0 155.4M203.5 137.7L265.0 157.9M180.4 144.2L248.7 184.1M193.3 154.6L246.0 187.4M180.5 148.6L243.5 190.2M182.2 153.7L238.9 195.0M169.2 152.5L227.0 205.4M166.8 153.1L223.1 208.5M167.1 158.9L216.0 213.3M161.2 166.6L198.7 223.0M159.8 168.0L195.1 224.7M158.4 169.9L191.0 226.5M146.9 165.2L174.6 232.3M145.9 167.0L171.2 233.3M136.2 166.1L151.0 237.6M133.8 164.6L146.0 238.2M134.4 180.2L142.4 238.6M130.2 166.4L137.2 239.1M129.5 181.7L133.3 239.3M120.3 180.0L116.2 239.3M117.4 170.0L108.3 238.7M107.8 182.5L94.5 236.8M105.7 180.8L90.2 236.0M106.0 166.8L82.7 234.3M98.2 176.3L75.0 232.2M92.8 173.0L63.5 228.3M83.9 169.9L47.6 221.2M77.4 167.3L36.4 214.9M75.1 166.8L33.2 212.8M83.8 150.6L24.2 206.4M75.1 151.1L14.7 198.4M68.5 153.5L11.5 195.3M72.3 148.9L9.2 193.1M63.3 152.4L6.2 189.8M73.0 144.4L4.1 187.5M59.3 150.1L1.1 183.8M61.3 146.5L-1.5 180.5M57.7 144.4L-5.5 174.8M61.8 138.8L-9.3 168.8M49.0 141.2L-11.7 164.4M51.4 138.1L-13.4 161.1M53.4 130.2L-18.7 148.5M48.3 129.4L-19.9 144.9M47.4 117.7L-24.5 122.9M41.8 115.8L-24.8 118.9M60.5 112.2L-25.0 112.4M46.2 110.0L-24.9 108.2M55.2 108.7L-24.8 104.9M53.2 101.3L-22.7 90.0M44.2 98.0L-22.0 86.5M60.9 96.2L-19.1 76.5M60.5 94.1L-17.6 72.5M46.1 87.9L-16.2 68.9M63.6 89.9L-13.1 62.2M59.3 86.9L-11.8 59.7M62.9 86.3L-9.9 56.2M59.7 80.7L-5.6 49.3M71.8 79.2L3.6 37.1M74.0 76.3L9.3 30.9M64.5 64.4L14.9 25.4M76.6 71.6L17.9 22.7M81.8 74.0L20.8 20.3M79.7 69.7L24.0 17.7M74.7 62.6L26.9 15.6M80.0 65.4L29.8 13.5M81.7 61.4L36.7 8.9M81.6 58.3L40.0 6.9M80.6 52.7L44.5 4.4M87.7 51.7L55.2 -0.9M98.9 63.4L62.7 -4.0M109.6 55.9L91.0 -12.2M111.7 46.3L99.5 -13.6M116.3 50.7L107.1 -14.6M119.3 53.7L112.6 -15.1M122.5 43.0L120.5 -15.4M124.8 58.9L124.6 -15.5M127.5 45.6L129.8 -15.4M132.7 52.9L141.5 -14.7M135.6 49.6L146.4 -14.2M138.3 45.3L150.1 -13.7M147.8 45.5L166.9 -10.4M149.2 48.8L171.5 -9.2M151.0 50.8L175.9 -7.9M151.0 55.4L179.5 -6.8M161.7 49.4L191.9 -2.1M160.5 55.3L195.5 -0.6M157.3 63.2L198.5 0.9M168.0 51.4L202.5 2.8M167.1 56.8L206.7 5.0M171.3 58.1L213.5 9.0M174.9 60.0L219.9 13.2M164.8 72.6L222.7 15.3M168.1 71.8L226.0 17.8M176.3 67.3L229.8 20.8M173.6 72.0L232.8 23.3M176.7 71.9L235.8 26.1M184.2 68.8L238.8 29.0M172.4 80.7L243.5 33.8M176.6 80.4L246.7 37.4M178.7 80.5L248.5 39.6M179.0 82.4L251.1 42.9M179.8 83.6L253.1 45.6M177.6 86.5L255.2 48.7M193.6 81.2L257.6 52.4M187.7 85.7L259.5 55.6M184.7 89.2L261.8 59.7M183.8 92.4L264.7 65.5M204.2 90.1L267.6 72.5M191.4 97.3L270.1 79.8M184.5 101.4L271.8 85.9M185.0 103.0L272.7 89.8M206.7 102.1L273.5 94.1M208.2 106.3L274.5 101.7' stroke='#3c3c3c' stroke-width='.7' fill='none' opacity='.7'/><path d='M196.4 119.2L274.0 127.0M200.1 120.9L273.6 129.6M202.4 123.4L272.8 133.8M202.5 125.0L272.2 136.7M184.2 123.6L271.2 140.6M200.4 128.8L270.1 144.4M192.6 130.9L267.5 151.8M187.2 134.4L263.1 161.8M187.6 136.2L261.5 164.8M199.1 143.0L259.5 168.4M196.8 144.6L257.3 172.1M180.7 138.9L255.5 174.9M195.5 148.6L253.0 178.4M179.8 142.1L251.0 181.2M186.5 154.5L241.4 192.5M175.2 151.4L235.2 198.5M176.8 155.3L232.0 201.4M168.3 149.7L229.8 203.2M167.7 156.8L219.4 211.1M169.7 164.3L213.1 215.2M167.6 165.0L209.6 217.3M163.3 162.6L206.1 219.3M160.1 161.1L202.9 221.0M154.7 167.4L187.1 228.1M155.4 172.8L183.6 229.4M147.6 160.6L180.2 230.5M144.7 168.4L167.6 234.3M142.8 169.0L163.5 235.2M142.2 173.4L159.8 236.0M138.2 166.6L155.1 236.9M127.0 165.5L129.8 239.4M125.3 180.1L125.6 239.5M123.3 168.9L121.3 239.5M119.5 169.0L112.8 239.1M115.1 171.1L103.8 238.2M115.0 162.4L100.0 237.7M104.2 178.5L86.4 235.2M106.1 161.9L79.1 233.4M96.6 173.1L69.9 230.6M92.5 176.5L66.0 229.2M91.4 170.5L59.1 226.6M86.1 174.8L55.1 224.8M92.5 161.1L51.5 223.1M85.6 164.6L44.4 219.5M80.2 168.1L40.8 217.5M82.9 156.0L30.4 210.9M78.0 158.2L26.9 208.4M82.2 149.8L20.9 203.8M80.2 148.7L17.0 200.5M63.1 143.9L-3.3 178.0M60.2 141.3L-7.5 171.8M66.2 131.5L-14.8 158.3M47.5 135.3L-16.4 154.6M50.4 132.5L-17.8 151.2M64.2 124.3L-20.9 141.5M65.7 122.4L-21.9 137.8M45.2 124.1L-22.7 134.3M42.0 121.9L-23.6 129.6M64.5 117.7L-24.1 126.1M50.9 113.9L-24.9 115.9M63.1 107.5L-24.5 101.2M55.2 104.8L-23.9 96.7M48.5 102.9L-23.6 94.4M48.3 97.2L-21.3 83.7M56.3 96.6L-20.1 79.6M59.5 90.2L-14.6 65.4M68.9 86.6L-7.4 52.1M56.2 76.4L-3.1 45.7M59.4 76.2L-1.2 43.1M60.3 74.5L1.1 40.2M64.2 72.0L6.5 33.9M76.0 76.1L11.4 28.8M79.2 61.9L33.0 11.3M89.5 61.4L48.2 2.5M92.0 62.0L51.6 0.8M88.2 47.8L59.2 -2.6M94.5 51.0L66.4 -5.4M101.6 60.9L70.7 -6.8M103.4 60.4L74.8 -8.2M105.6 61.0L78.9 -9.3M105.5 56.4L82.1 -10.2M106.3 51.3L87.0 -11.3M109.1 47.2L94.5 -12.8M114.9 53.5L103.2 -14.2M120.7 49.6L116.3 -15.3M128.8 52.2L133.0 -15.3M132.0 45.4L138.4 -15.0M141.6 43.5L155.3 -12.9M141.6 50.9L158.8 -12.2M146.6 42.6L163.4 -11.3M148.7 64.3L183.4 -5.4M154.7 57.1L187.6 -3.9M167.6 59.5L210.2 7.1M176.1 56.1L217.0 11.3M181.6 72.5L241.0 31.1M184.1 90.8L263.2 62.3M188.0 93.0L266.4 69.5M188.9 95.9L268.8 75.7M207.1 95.9L271.2 83.4M196.5 105.4L274.1 98.2M200.0 108.2L274.7 104.4M192.3 110.1L274.9 107.7' stroke='#0e0e0e' stroke-width='.7' fill='none' opacity='.7'/></g><path d='M31 112 C30 80 56 44 96 31 M33.500 126 C29 100 40 62 76 40' fill='none' stroke='#3d3d3d' stroke-width='.9'/><path d='M37 108 C37 75 70 32 126 32 C170 32 205 60 222 88 C228 98 229.500 104 229.500 110 C229 124 214 135 197 141 L158 160 L152 150 L128 142 L104 150 L99 161 L68 145.500 C50 140 37.500 128 37 108Z' fill='#555'/><path d='M41 108 C41 77 73 35.500 126 35.500 C168 35.500 202 62 219 90 C224 99 226 104 226 110 C225 122 212 131 195 137 L150 128 L128 120 L106 128 L68 140 C54 134 41.500 126 41 108Z' fill='#4b4b4b'/><path d='M43 118 Q48 133 68 141 L100 158 L103 151 L72 135 Q56 129 49 116Z' fill='#1c1c1c'/><path d='M213.500 100 Q212 124 195 136 L158 155 L155 148 L189 131 Q205 122 210 100Z' fill='#1c1c1c'/><path d='M99 158 L157 158 L160 164 Q152 180 143 184 L128.500 189 L114 184 Q104 180 96 164Z' fill='#363636' filter='url(#blr)'/><path d='M128.500 172 L133 190 L128.500 196 L124 190Z' fill='#353535' filter='url(#blr)'/><path d='M93 44 Q100 36 112 37 Q124 33 136 37 Q146 38 147 46 Q150 56 146 66 Q140 76 130 80 Q120 84 114 76 Q104 72 100 62 Q92 56 93 44Z' fill='#1e1e1e'/><path d='M150 50 Q156 44 164 48 Q172 46 176 54 Q184 62 180 70 Q176 80 166 78 Q158 80 154 72 Q146 62 150 50Z' fill='#242424'/><path d='M82 77 Q92 84 94 98 Q93 110 86 116 Q82 112 87 101 Q88 90 80 81Z' fill='#181818'/><path d='M98 90 Q105 98 102 110 Q98 117 94 112 Q98 102 96 94Z' fill='#222'/><path d='M114 124 Q118 112 130 108 Q140 110 145 120 Q154 124 163 116 Q170 104 182 106 Q190 112 186 126 Q180 138 168 136 Q160 130 150 130 L140 124 L128 122 L118 130 L104 132 Q94 130 98 124 Q106 126 114 124Z' fill='#1b1b1b'/><path d='M60 132 Q76 128 92 134 L96 140 L70 138Z' fill='#202020'/><ellipse cx='95.6' cy='47' rx='4.3' ry='4.6' fill='#000'/><ellipse cx='97.5' cy='57' rx='5' ry='3.3' fill='#000'/><ellipse cx='112' cy='38.8' rx='5.5' ry='3.2' fill='#000'/><ellipse cx='125.6' cy='37.5' rx='6.5' ry='3.3' fill='#000'/><ellipse cx='137.5' cy='40' rx='4' ry='3.2' fill='#000'/><ellipse cx='144' cy='43' rx='2.6' ry='2.4' fill='#000'/><ellipse cx='103' cy='137.700' rx='9.500' ry='7.500' fill='#5a5a5a'/><ellipse cx='153' cy='135' rx='10.500' ry='7.500' fill='#5c5c5c'/><ellipse cx='127' cy='136.800' rx='14.500' ry='10.800' fill='#e4e4e4'/><ellipse cx='127' cy='137' rx='10.500' ry='7.500' fill='#c4c4c4'/><path d='M112 151 Q118 146.500 124.500 150 L125 157.500 Q118 160 112.500 156.500Z M131 149.500 Q137 145.500 143 149 L143 155 Q137 158.500 131.500 156.500Z' fill='#fafafa'/><path d='M127 155 L129 155 L129.800 170 L128.300 170Z' fill='#d0d0d0'/><path d='M143.500 148.500 L150 150' stroke='#ddd' stroke-width='1.200'/><path d='M68 144.500 L71.500 143 L100.500 157.500 L102.500 165 L96.500 164Z' fill='#fafafa'/><path d='M75 148 L96.500 159.500' stroke='#8e8e8e' stroke-width='1.400'/><path d='M195.500 139 L192 138 L158 155.500 L155.500 164.500 L161.500 163.500Z' fill='#fafafa'/><path d='M189.500 142 L162.500 158' stroke='#8e8e8e' stroke-width='1.400'/><path d='M12 150 C12 120 14 100 22 82 C33 56 52 36 80 23 C98 15 112 13.500 123 13.500 C140 13.500 158 16 172 22 C196 32 213 54 226 82 C236 105 243 130 243 152 C243 166 240 172 232 178 C214 191 170 205 131 206 C90 206 50 192 27 180 C16 174 12 165 12 150Z' fill='none' stroke='#8a8a8a' stroke-width='.9'/></g><g filter='url(#blr0)'><ellipse cx='75' cy='64.4' rx='6.2' ry='5.2' fill='#fff'/><ellipse cx='82' cy='67' rx='3.5' ry='2.8' fill='#fff'/><ellipse cx='97.5' cy='67.5' rx='6' ry='8' fill='#fff'/><ellipse cx='93' cy='72.5' rx='4.5' ry='3.5' fill='#fff'/><ellipse cx='103' cy='43' rx='2.5' ry='2.2' fill='#fff'/><ellipse cx='70' cy='81.2' rx='9' ry='5.5' fill='#fff'/><ellipse cx='78' cy='104.4' rx='7' ry='5' fill='#fff'/><ellipse cx='61' cy='118' rx='9' ry='8' fill='#fff'/><ellipse cx='72' cy='124' rx='9.5' ry='7' fill='#fff'/><ellipse cx='80.5' cy='119.5' rx='5' ry='5' fill='#fff'/><ellipse cx='68' cy='110' rx='4.5' ry='3.5' fill='#fff'/><ellipse cx='112' cy='43.800' rx='3.800' ry='1.800' fill='#fff'/><ellipse cx='127' cy='42' rx='2.600' ry='1.200' fill='#fff'/><path d='M179.500 118 L180.500 124 M181.500 126.500 L182.500 130' stroke='#fff' stroke-width='2' stroke-linecap='round'/></g></svg><svg style='left:1040px;top:340px' width='340' height='280' viewBox='0 0 340 280'><g filter='url(#petn)'><path d='M36 150 C36 80 85 32 152 32 C225 32 282 85 282 150 L281 195 Q280 208 268 213 Q215 238 152 238.500 Q95 238 48 212 Q37 206 36.500 195Z' fill='url(#petg)' filter='url(#blr2)'/></g><circle cx='103' cy='84' r='3.5' fill='#fff' opacity='0.6' filter='url(#blr15)'/><circle cx='110' cy='86' r='3' fill='#fff' opacity='0.5' filter='url(#blr15)'/><circle cx='126' cy='86' r='3.5' fill='#fff' opacity='0.6' filter='url(#blr15)'/><circle cx='140' cy='96' r='4' fill='#fff' opacity='0.7' filter='url(#blr15)'/><circle cx='146' cy='102' r='3' fill='#fff' opacity='0.5' filter='url(#blr15)'/><circle cx='118' cy='100' r='2.5' fill='#fff' opacity='0.35' filter='url(#blr15)'/><circle cx='203' cy='183' r='3' fill='#fff' opacity='0.35' filter='url(#blr15)'/><circle cx='112' cy='176' r='3' fill='#fff' opacity='0.3' filter='url(#blr15)'/><circle cx='225' cy='138' r='2.5' fill='#fff' opacity='0.35' filter='url(#blr15)'/><circle cx='170' cy='110' r='3' fill='#fff' opacity='0.3' filter='url(#blr15)'/><circle cx='150' cy='160' r='3' fill='#fff' opacity='0.3' filter='url(#blr15)'/></svg><div class='vt' style='left:363px;top:137px'>Patient I</div><div class='vt' style='left:363px;top:149px'>123</div><div class='vt' style='left:363px;top:161px'>03.04.1944 - F</div><div class='vt' style='left:363px;top:173px'>Body-Low Dose CT</div><div class='vt' style='left:363px;top:805px'>Image: 73/150</div><div class='vt' style='left:363px;top:817px'>W: 350 C: 35</div><div class='vt' style='left:363px;top:490px'>R</div><div class='vt' style='left:531px;top:137px'>A</div><div class='vt' style='left:704px;top:137px'>Patient I</div><div class='vt' style='left:704px;top:149px'>123</div><div class='vt' style='left:704px;top:161px'>03.04.1944 - F</div><div class='vt' style='left:704px;top:173px'>Body-Low Dose CT</div><div class='vt' style='left:704px;top:805px'>Image: 73/150</div><div class='vt' style='left:704px;top:817px'>W: 350 C: 35</div><div class='vt' style='left:704px;top:490px'>R</div><div class='vt' style='left:872px;top:137px'>A</div><div class='vt' style='left:1045px;top:137px'>Patient I</div><div class='vt' style='left:1045px;top:149px'>123</div><div class='vt' style='left:1045px;top:161px'>03.04.1944 - F</div><div class='vt' style='left:1045px;top:173px'>[WB_CTAC] Total Body</div><div class='vt' style='left:1045px;top:185px'>29.06.2017 10:45:30</div><div class='vt' style='left:1045px;top:805px'>Image: 73/150</div><div class='vt' style='left:1045px;top:817px'>W: 6426.86 C: 3192.93</div><div class='vt' style='left:1045px;top:490px'>R</div><div class='vt' style='left:1213px;top:137px'>A</div><div class='sl' style='left:680px;top:159px;height:650px'></div><div class='sh2' style='left:673px;top:458px'></div><svg style='left:673px;top:458px' width='16' height='30' viewBox='0 0 16 30'><path d='M4.200 9.5 L8 6.500 L11.800 9.500 M4.200 20.500 L8 23.500 L11.800 20.500' fill='none' stroke='#fff' stroke-width='1.3'/><circle cx='8' cy='15' r='1.8' fill='none' stroke='#fff' stroke-width='1.2'/></svg><div class='sl' style='left:1021px;top:159px;height:650px'></div><div class='sh2' style='left:1014px;top:458px'></div><svg style='left:1014px;top:458px' width='16' height='30' viewBox='0 0 16 30'><path d='M4.200 9.5 L8 6.500 L11.800 9.500 M4.200 20.500 L8 23.500 L11.800 20.500' fill='none' stroke='#fff' stroke-width='1.3'/><circle cx='8' cy='15' r='1.8' fill='none' stroke='#fff' stroke-width='1.2'/></svg><div class='sl' style='left:1362px;top:159px;height:650px'></div><div class='sh2' style='left:1355px;top:458px'></div><svg style='left:1355px;top:458px' width='16' height='30' viewBox='0 0 16 30'><path d='M4.200 9.5 L8 6.500 L11.800 9.500 M4.200 20.500 L8 23.500 L11.800 20.500' fill='none' stroke='#fff' stroke-width='1.3'/><circle cx='8' cy='15' r='1.8' fill='none' stroke='#fff' stroke-width='1.2'/></svg>
<div class='abs' id='player'></div><div class='t' style='left:360px;top:851px;font-size:12.2px;color:#fff;-webkit-text-stroke:.2px #fff'>Player</div><svg style='left:405px;top:846px' width='26' height='26' viewBox='0 0 26 26'><rect x='.700' y='.700' width='24.600' height='24.600' rx='5.500' fill='#000' stroke='#1b9dbe' stroke-width='1.400'/><path d='M10 5.500 H16 M10 8 H16' stroke='#fff' stroke-width='1.300'/><path d='M10 9.800 H16 V14.500 H20 L13 21.500 L6 14.500 H10Z' fill='#fff'/></svg><svg style='left:443px;top:846px' width='26' height='26' viewBox='0 0 26 26'><rect x='.700' y='.700' width='24.600' height='24.600' rx='5.500' fill='#000' stroke='#1b9dbe' stroke-width='1.400'/><path d='M3.700 13.400 A9 9 0 0 1 21.600 13.400' fill='none' stroke='#fff' stroke-width='1.100'/><path d='M3.200 13.400 A9.500 9.500 0 0 1 5.900 7 L8 9 A6.600 6.600 0 0 0 6.200 13.400Z' fill='#fff'/><path d='M6.600 6.600 L12.400 11.400 L11 13Z' fill='#fff'/><path d='M8.800 19 H16.800' stroke='#fff' stroke-width='2'/></svg><svg style='left:481px;top:846px' width='26' height='26' viewBox='0 0 26 26'><rect x='.700' y='.700' width='24.600' height='24.600' rx='5.500' fill='#000' stroke='#1b9dbe' stroke-width='1.400'/><g transform='translate(25.300 0) scale(-1 1)'><path d='M3.700 13.400 A9 9 0 0 1 21.600 13.400' fill='none' stroke='#fff' stroke-width='1.100'/><path d='M3.200 13.400 A9.500 9.500 0 0 1 5.900 7 L8 9 A6.600 6.600 0 0 0 6.200 13.400Z' fill='#fff'/><path d='M6.600 6.600 L12.400 11.400 L11 13Z' fill='#fff'/></g><path d='M8.800 19 H16.800 M12.800 15 V23' stroke='#fff' stroke-width='2'/></svg><svg style='left:778px;top:846px' width='26' height='26' viewBox='0 0 26 26'><rect x='.700' y='.700' width='24.600' height='24.600' rx='5.500' fill='#000' stroke='#1b9dbe' stroke-width='1.400'/><path d='M7.300 6.500 V19.500' stroke='#fff' stroke-width='1.500'/><path d='M18.500 6.300 V19.700 L9.500 13Z' fill='#fff'/></svg><svg style='left:816px;top:846px' width='26' height='26' viewBox='0 0 26 26'><rect x='.700' y='.700' width='24.600' height='24.600' rx='5.500' fill='#000' stroke='#1b9dbe' stroke-width='1.400'/><path d='M16.500 6.500 L8 13 L16.500 19.500' fill='none' stroke='#fff' stroke-width='1.300'/></svg><svg style='left:854px;top:846px' width='26' height='26' viewBox='0 0 26 26'><rect x='.700' y='.700' width='24.600' height='24.600' rx='5.500' fill='#000' stroke='#1b9dbe' stroke-width='1.400'/><path d='M8.800 6.200 V19.800 L18.500 13Z' fill='#fff'/></svg><svg style='left:892px;top:846px' width='26' height='26' viewBox='0 0 26 26'><rect x='.700' y='.700' width='24.600' height='24.600' rx='5.500' fill='#000' stroke='#1b9dbe' stroke-width='1.400'/><path d='M9.500 6.500 L18 13 L9.500 19.500' fill='none' stroke='#fff' stroke-width='1.300'/></svg><svg style='left:930px;top:846px' width='26' height='26' viewBox='0 0 26 26'><rect x='.700' y='.700' width='24.600' height='24.600' rx='5.500' fill='#000' stroke='#1b9dbe' stroke-width='1.400'/><path d='M18.700 6.500 V19.500' stroke='#fff' stroke-width='1.500'/><path d='M7.500 6.300 V19.700 L16.500 13Z' fill='#fff'/></svg><svg style='left:1112px;top:847px' width='26' height='26' viewBox='0 0 26 26'><rect x='.700' y='.700' width='24.600' height='24.600' rx='5.500' fill='#000' stroke='#0d4554' stroke-width='1.400'/><path d='M14.200 7.600 L6.300 13 L14.200 18.400' fill='none' stroke='#585858' stroke-width='1.100'/><path d='M20 7.600 V18.400 L11.600 13Z' fill='#585858'/></svg><svg style='left:1150px;top:847px' width='26' height='26' viewBox='0 0 26 26'><rect x='.700' y='.700' width='24.600' height='24.600' rx='5.500' fill='#000' stroke='#0d4554' stroke-width='1.400'/><path d='M11.800 7.600 L19.700 13 L11.800 18.400' fill='none' stroke='#585858' stroke-width='1.100'/><path d='M6 7.600 V18.400 L14.400 13Z' fill='#585858'/></svg><svg style='left:1188px;top:847px' width='26' height='26' viewBox='0 0 26 26'><rect x='.700' y='.700' width='24.600' height='24.600' rx='5.500' fill='#000' stroke='#0d4554' stroke-width='1.400'/><path d='M3.500 12.800 L8.500 9.800 V15.900Z' fill='#585858'/><rect x='11' y='7.500' width='11' height='11' rx='2' fill='none' stroke='#585858' stroke-width='1.500'/><path d='M16.500 7.500 V18.500 M11 13 H22' stroke='#585858' stroke-width='1.300'/></svg><svg style='left:1226px;top:847px' width='26' height='26' viewBox='0 0 26 26'><rect x='.700' y='.700' width='24.600' height='24.600' rx='5.500' fill='#000' stroke='#1b9dbe' stroke-width='1.400'/><circle cx='6.500' cy='13' r='2.600' fill='#fff'/><circle cx='13' cy='13' r='2.600' fill='#fff'/><circle cx='19.500' cy='13' r='2.600' fill='#fff'/></svg><svg style='left:1264px;top:847px' width='26' height='26' viewBox='0 0 26 26'><rect x='.700' y='.700' width='24.600' height='24.600' rx='5.500' fill='#000' stroke='#1b9dbe' stroke-width='1.400'/><path d='M22.500 12.800 L17.500 9.800 V15.900Z' fill='#fff'/><rect x='4' y='7.500' width='11' height='11' rx='2' fill='none' stroke='#fff' stroke-width='1.500'/><path d='M9.500 7.500 V18.500 M4 13 H15' stroke='#fff' stroke-width='1.300'/></svg><svg style='left:1302px;top:847px' width='26' height='26' viewBox='0 0 26 26'><rect x='.700' y='.700' width='24.600' height='24.600' rx='5.500' fill='#000' stroke='#0d4554' stroke-width='1.400'/><path d='M3 13 L9 9.500 V16.500Z' fill='#585858'/><circle cx='16.700' cy='9.800' r='3.300' fill='#585858'/><path d='M10 19 Q11 14 14.500 13.500 L16.700 14.500 L19 13.500 Q22.500 14 23.500 19Z' fill='#585858'/></svg><svg style='left:1340px;top:846px' width='26' height='26' viewBox='0 0 26 26'><rect x='.700' y='.700' width='24.600' height='24.600' rx='5.500' fill='#000' stroke='#1b9dbe' stroke-width='1.400'/><path d='M23 13.300 L17 9.700 V17Z' fill='#fff'/><ellipse cx='9.300' cy='10' rx='3.200' ry='3.500' fill='#fff'/><path d='M2.800 19 Q3.800 14 7 13.500 L9.300 14.500 L11.600 13.500 Q15 14 16 19Z' fill='#fff'/></svg>
<div class='abs' style='left:0;top:0;width:1px;height:880px;background:#17506b'></div><div class='abs' style='left:0;top:0;width:1380px;height:1px;background:#5d6470'></div><div class='abs' style='left:0;top:879px;width:1380px;height:1px;background:linear-gradient(90deg,#1f6f8f,#1f6f8f 25%,#1b2d5c 60%)'></div><div class='abs' style='left:1379px;top:1px;width:1px;height:879px;background:#1b2a5e'></div></div></body></html>
